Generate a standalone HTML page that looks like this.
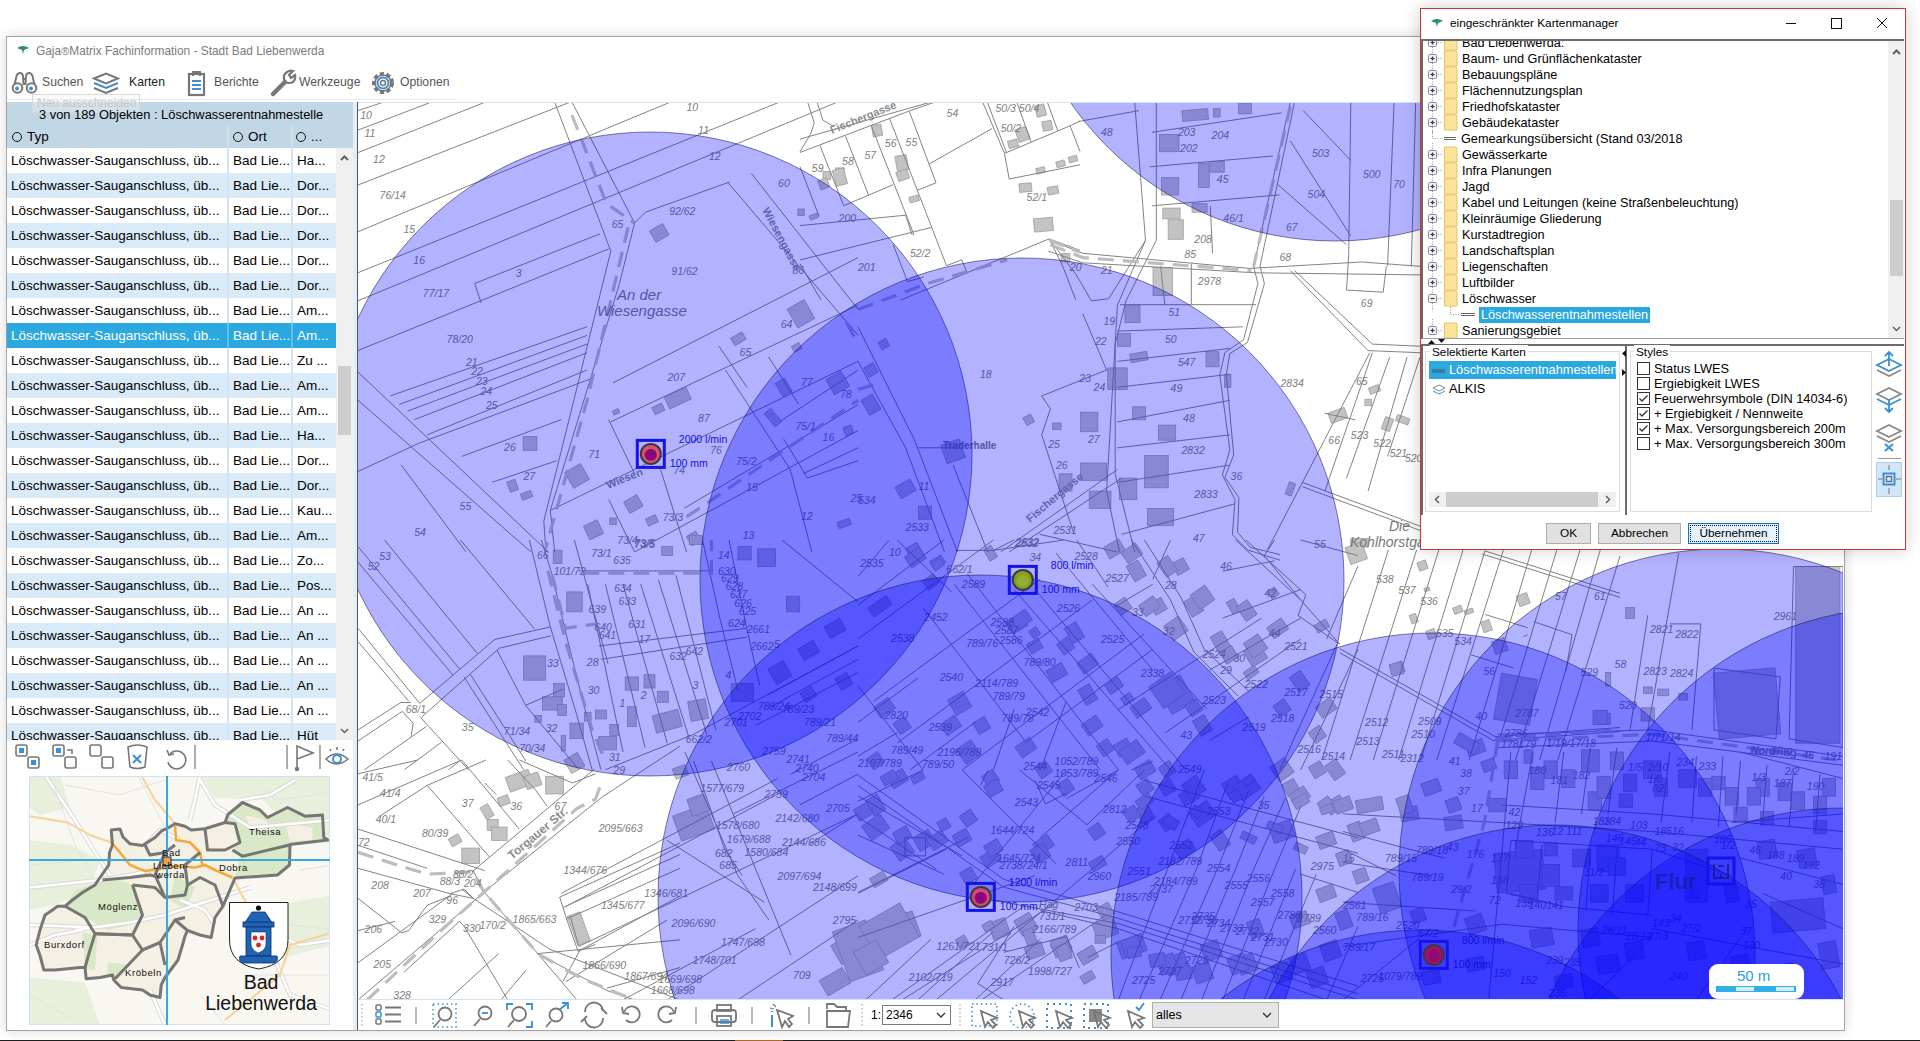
<!DOCTYPE html><html><head><meta charset="utf-8"><title>Gaja Matrix</title><style>

*{box-sizing:border-box;margin:0;padding:0}
html,body{width:1920px;height:1041px;overflow:hidden;background:#fff;font-family:"Liberation Sans",sans-serif;color:#000}
.a{position:absolute}
#win{left:6px;top:36px;width:1839px;height:995px;border:1px solid #a3a3a3;background:#fff;box-shadow:0 0 12px rgba(0,0,0,.16)}
#taskbar{left:0;top:1040px;width:1920px;height:1px;background:#1e1e1e}
.tt{font-size:11.9px;color:#7b7b7b;white-space:nowrap}
.tb{font-size:12.2px;color:#555;white-space:nowrap}
.row{position:absolute;left:7px;width:329px;height:25px;font-size:13.5px;line-height:25px;white-space:nowrap;overflow:hidden}
.row span{position:absolute;top:0}
.row .c1{left:4px}.row .c2{left:226px}.row .c3{left:290px}
.row i{position:absolute;top:0;width:2px;height:25px;background:#d3e5f5}
.odd{background:#fff}.even{background:#d9eaf8}
.sel{background:#2aa8df;color:#fff}
.sel i{background:#5fbfe8}
#dlg{left:1420px;top:8px;width:486px;height:542px;border:1px solid #d13438;background:#fff;box-shadow:0 0 16px rgba(0,0,0,.2)}
.tr{position:absolute;font-size:13px;line-height:16px;height:16px;white-space:nowrap}
.lbl{font-size:12.5px;white-space:nowrap}
.cb{position:absolute;width:13px;height:13px;border:1px solid #333;background:#fff}
.btn{position:absolute;height:21px;border:1px solid #adadad;background:#e1e1e1;font-size:11.8px;line-height:19px;text-align:center}

</style></head><body>
<div id="win" class="a"></div>
<svg class="a" style="left:16px;top:45px" width="14" height="10" viewBox="0 0 14 10"><path d="M1 3 Q7 -1 13 3 L8 5 L7 9 L6 5 Z" fill="#2e8a7a"/></svg>
<div class="a tt" style="left:36px;top:44px">Gaja<span style="font-size:11px">®</span>Matrix Fachinformation - Stadt Bad Liebenwerda</div>
<div class="a tb" style="left:42px;top:75px">Suchen</div>
<div class="a tb" style="left:129px;top:75px;color:#222">Karten</div>
<div class="a tb" style="left:214px;top:75px">Berichte</div>
<div class="a tb" style="left:299px;top:75px">Werkzeuge</div>
<div class="a tb" style="left:400px;top:75px">Optionen</div>
<svg class="a" style="left:10px;top:66px" width="450" height="34" viewBox="0 0 450 34" fill="none" stroke-width="2.2">
<g stroke="#777" stroke-width="2"><path d="M4 21 L6.5 10 Q7.5 7 10 7 Q12.5 7 13 10 L13.5 19"/><path d="M25 21 L22.5 10 Q21.5 7 19 7 Q16.5 7 16 10 L15.5 19"/><path d="M13 13 H16 M13 18 H16"/><circle cx="7.5" cy="22" r="4.8" fill="#fff"/><circle cx="21.5" cy="22" r="4.8" fill="#fff"/></g>
<circle cx="7" cy="22.5" r="2" fill="#3a8fd8" stroke="none"/><circle cx="21" cy="22.5" r="2" fill="#3a8fd8" stroke="none"/>
<g transform="translate(82,0)" stroke-width="2"><path d="M2 12.5 L14 7.5 L26 12.5 L14 17.5 Z" stroke="#777"/><path d="M2 17 L14 22 L26 17" stroke="#3a8fd8"/><path d="M2 22 L14 27 L26 22" stroke="#777"/></g>
<g transform="translate(177,0)"><rect x="2" y="8" width="15" height="21" stroke="#777"/><path d="M6 6 V10 M13 6 V10 M5 6 H14" stroke="#777"/><path d="M5 15 H14 M5 19 H14 M5 23 H14" stroke="#3a8fd8"/></g>
<g transform="translate(259,0)"><path d="M4 28 L16 16" stroke="#777" stroke-width="4.5" stroke-linecap="round"/><path d="M16 16 Q13 9 18 6 Q21 4 24 5 L20 9 L22 12 L26 9 Q27 13 24 16 Q20 18 16 16" stroke="#777"/><circle cx="5" cy="27" r="1" fill="#3a8fd8" stroke="none"/></g>
<g transform="translate(360,0)"><circle cx="13" cy="17" r="9" stroke="#777" stroke-dasharray="4 2.5" stroke-width="4"/><circle cx="13" cy="17" r="8" stroke="#777" stroke-width="1.5"/><circle cx="13" cy="17" r="5.5" stroke="#3a8fd8" stroke-width="2"/><circle cx="13" cy="17" r="2.5" stroke="#777" stroke-width="1.5"/></g>
</svg>
<div class="a" style="left:7px;top:99px;width:449px;height:1px;background:#e8e8e8"></div>
<div class="a" style="left:7px;top:102px;width:346px;height:46px;background:#c2d7e6"></div>
<div class="a" style="left:32px;top:94px;width:108px;height:19px;border:1px solid #d8d8d8;background:rgba(240,240,240,.35);font-size:12px;color:#c8c8c8;padding-left:4px;line-height:17px">Neu ausschneiden</div>
<div class="a" style="left:39px;top:107px;font-size:12.85px;white-space:nowrap">3 von 189 Objekten : Löschwasserentnahmestelle</div>
<div class="a" style="left:12px;top:129px;font-size:13.5px;white-space:nowrap"><span style="display:inline-block;width:10px;height:10px;border:1px solid #111;border-radius:50%;margin-right:5px;vertical-align:-1px"></span>Typ</div>
<div class="a" style="left:233px;top:129px;font-size:13.5px;white-space:nowrap"><span style="display:inline-block;width:10px;height:10px;border:1px solid #111;border-radius:50%;margin-right:5px;vertical-align:-1px"></span>Ort</div>
<div class="a" style="left:296px;top:129px;font-size:13.5px;white-space:nowrap"><span style="display:inline-block;width:10px;height:10px;border:1px solid #111;border-radius:50%;margin-right:5px;vertical-align:-1px"></span>...</div>
<div class="a" style="left:227px;top:126px;width:2px;height:21px;background:#cfe0ee"></div>
<div class="a" style="left:291px;top:126px;width:2px;height:21px;background:#cfe0ee"></div>
<div class="a" style="left:7px;top:148px;width:329px;height:592px;overflow:hidden">
<div class="row odd" style="left:0;top:0px"><span class="c1">Löschwasser-Sauganschluss, üb...</span><i style="left:220px"></i><span class="c2">Bad Lie...</span><i style="left:284px"></i><span class="c3">Ha...</span></div>
<div class="row even" style="left:0;top:25px"><span class="c1">Löschwasser-Sauganschluss, üb...</span><i style="left:220px"></i><span class="c2">Bad Lie...</span><i style="left:284px"></i><span class="c3">Dor...</span></div>
<div class="row odd" style="left:0;top:50px"><span class="c1">Löschwasser-Sauganschluss, üb...</span><i style="left:220px"></i><span class="c2">Bad Lie...</span><i style="left:284px"></i><span class="c3">Dor...</span></div>
<div class="row even" style="left:0;top:75px"><span class="c1">Löschwasser-Sauganschluss, üb...</span><i style="left:220px"></i><span class="c2">Bad Lie...</span><i style="left:284px"></i><span class="c3">Dor...</span></div>
<div class="row odd" style="left:0;top:100px"><span class="c1">Löschwasser-Sauganschluss, üb...</span><i style="left:220px"></i><span class="c2">Bad Lie...</span><i style="left:284px"></i><span class="c3">Dor...</span></div>
<div class="row even" style="left:0;top:125px"><span class="c1">Löschwasser-Sauganschluss, üb...</span><i style="left:220px"></i><span class="c2">Bad Lie...</span><i style="left:284px"></i><span class="c3">Dor...</span></div>
<div class="row odd" style="left:0;top:150px"><span class="c1">Löschwasser-Sauganschluss, üb...</span><i style="left:220px"></i><span class="c2">Bad Lie...</span><i style="left:284px"></i><span class="c3">Am...</span></div>
<div class="row sel" style="left:0;top:175px"><span class="c1">Löschwasser-Sauganschluss, üb...</span><i style="left:220px"></i><span class="c2">Bad Lie...</span><i style="left:284px"></i><span class="c3">Am...</span></div>
<div class="row odd" style="left:0;top:200px"><span class="c1">Löschwasser-Sauganschluss, üb...</span><i style="left:220px"></i><span class="c2">Bad Lie...</span><i style="left:284px"></i><span class="c3">Zu ...</span></div>
<div class="row even" style="left:0;top:225px"><span class="c1">Löschwasser-Sauganschluss, üb...</span><i style="left:220px"></i><span class="c2">Bad Lie...</span><i style="left:284px"></i><span class="c3">Am...</span></div>
<div class="row odd" style="left:0;top:250px"><span class="c1">Löschwasser-Sauganschluss, üb...</span><i style="left:220px"></i><span class="c2">Bad Lie...</span><i style="left:284px"></i><span class="c3">Am...</span></div>
<div class="row even" style="left:0;top:275px"><span class="c1">Löschwasser-Sauganschluss, üb...</span><i style="left:220px"></i><span class="c2">Bad Lie...</span><i style="left:284px"></i><span class="c3">Ha...</span></div>
<div class="row odd" style="left:0;top:300px"><span class="c1">Löschwasser-Sauganschluss, üb...</span><i style="left:220px"></i><span class="c2">Bad Lie...</span><i style="left:284px"></i><span class="c3">Dor...</span></div>
<div class="row even" style="left:0;top:325px"><span class="c1">Löschwasser-Sauganschluss, üb...</span><i style="left:220px"></i><span class="c2">Bad Lie...</span><i style="left:284px"></i><span class="c3">Dor...</span></div>
<div class="row odd" style="left:0;top:350px"><span class="c1">Löschwasser-Sauganschluss, üb...</span><i style="left:220px"></i><span class="c2">Bad Lie...</span><i style="left:284px"></i><span class="c3">Kau...</span></div>
<div class="row even" style="left:0;top:375px"><span class="c1">Löschwasser-Sauganschluss, üb...</span><i style="left:220px"></i><span class="c2">Bad Lie...</span><i style="left:284px"></i><span class="c3">Am...</span></div>
<div class="row odd" style="left:0;top:400px"><span class="c1">Löschwasser-Sauganschluss, üb...</span><i style="left:220px"></i><span class="c2">Bad Lie...</span><i style="left:284px"></i><span class="c3">Zo...</span></div>
<div class="row even" style="left:0;top:425px"><span class="c1">Löschwasser-Sauganschluss, üb...</span><i style="left:220px"></i><span class="c2">Bad Lie...</span><i style="left:284px"></i><span class="c3">Pos...</span></div>
<div class="row odd" style="left:0;top:450px"><span class="c1">Löschwasser-Sauganschluss, üb...</span><i style="left:220px"></i><span class="c2">Bad Lie...</span><i style="left:284px"></i><span class="c3">An ...</span></div>
<div class="row even" style="left:0;top:475px"><span class="c1">Löschwasser-Sauganschluss, üb...</span><i style="left:220px"></i><span class="c2">Bad Lie...</span><i style="left:284px"></i><span class="c3">An ...</span></div>
<div class="row odd" style="left:0;top:500px"><span class="c1">Löschwasser-Sauganschluss, üb...</span><i style="left:220px"></i><span class="c2">Bad Lie...</span><i style="left:284px"></i><span class="c3">An ...</span></div>
<div class="row even" style="left:0;top:525px"><span class="c1">Löschwasser-Sauganschluss, üb...</span><i style="left:220px"></i><span class="c2">Bad Lie...</span><i style="left:284px"></i><span class="c3">An ...</span></div>
<div class="row odd" style="left:0;top:550px"><span class="c1">Löschwasser-Sauganschluss, üb...</span><i style="left:220px"></i><span class="c2">Bad Lie...</span><i style="left:284px"></i><span class="c3">An ...</span></div>
<div class="row even" style="left:0;top:575px"><span class="c1">Löschwasser-Sauganschluss, üb...</span><i style="left:220px"></i><span class="c2">Bad Lie...</span><i style="left:284px"></i><span class="c3">Hüt</span></div>
</div>
<div class="a" style="left:336px;top:148px;width:17px;height:592px;background:#f0f0f0"></div>
<div class="a" style="left:338px;top:366px;width:13px;height:69px;background:#cdcdcd"></div>
<svg class="a" style="left:336px;top:150px" width="17" height="590"><path d="M5 10 L8.5 6.5 L12 10" stroke="#606060" stroke-width="2" fill="none"/><path d="M5 579 L8.5 582.5 L12 579" stroke="#606060" stroke-width="1.5" fill="none"/></svg>
<div class="a" style="left:353px;top:102px;width:4px;height:928px;background:#e3eef9"></div>
<div class="a" style="left:357px;top:102px;width:1px;height:928px;background:#555"></div>
<svg class="a" style="left:10px;top:742px" width="345" height="30" fill="none" stroke="#777" stroke-width="1.6">
<rect x="6" y="3" width="11" height="11" rx="2"/><rect x="18" y="15" width="11" height="11" rx="2"/><rect x="9" y="6" width="5" height="5" fill="#3a8fd8" stroke="none"/><rect x="21" y="18" width="5" height="5" fill="#3a8fd8" stroke="none"/>
<rect x="43" y="3" width="11" height="11" rx="2"/><rect x="55" y="15" width="11" height="11" rx="2"/><rect x="46" y="6" width="5" height="5" fill="#3a8fd8" stroke="none"/><path d="M57 8 H62 V12"/>
<rect x="80" y="3" width="11" height="11" rx="2"/><rect x="92" y="15" width="11" height="11" rx="2"/>
<path d="M118 5 Q127 1 137 5 L135 25 Q127 28 120 25 Z"/><path d="M123 13 L131 21 M131 13 L123 21" stroke="#3a8fd8" stroke-width="2"/>
<path d="M160 12 A9 9 0 1 1 158 20"/><path d="M157 8 L159 13 L164 12" />
<path d="M185 3 V27" stroke="#999"/><path d="M277 3 V27" stroke="#999"/>
<path d="M287 27 V4 L303 11 L287 17"/><circle cx="287" cy="27" r="1.5" fill="#777"/>
<path d="M310 3 V27" stroke="#999"/>
<path d="M316 17 Q326 7 338 17 Q326 27 316 17 Z"/><circle cx="327" cy="17" r="4" stroke="#3a8fd8" stroke-width="2"/><path d="M327 5 V8 M320 7 L321 9 M334 7 L333 9"/>
</svg>
<svg class="a" style="left:358px;top:102px" width="1485" height="898" viewBox="0 0 1485 898">
<rect width="1485" height="898" fill="#fff"/>
<g fill="#c3c3c3" stroke="#a0a0a0" stroke-width="0.8">
<rect x="293.7" y="124.5" width="15.1" height="13.0" transform="rotate(-30 301.2 131.0)"/>
<rect x="433.3" y="201.0" width="19.4" height="21.6" transform="rotate(-30 443.0 211.8)"/>
<rect x="373.9" y="232.5" width="13.0" height="8.6" transform="rotate(-30 380.3 236.8)"/>
<rect x="434.4" y="242.2" width="8.6" height="6.5" transform="rotate(-30 438.7 245.5)"/>
<rect x="307.9" y="289.6" width="23.8" height="13.0" transform="rotate(-25 319.8 296.1)"/>
<rect x="295.0" y="303.0" width="10.8" height="7.8" transform="rotate(-25 300.4 306.9)"/>
<rect x="254.8" y="307.7" width="6.5" height="4.3" transform="rotate(-25 258.0 309.9)"/>
<rect x="165.1" y="334.5" width="13.8" height="13.8" transform="rotate(0 172.0 341.4)"/>
<rect x="210.0" y="364.8" width="18.2" height="18.2" transform="rotate(-30 219.1 373.9)"/>
<rect x="150.4" y="378.4" width="8.6" height="10.8" transform="rotate(-20 154.7 383.8)"/>
<rect x="163.2" y="390.1" width="10.8" height="6.5" transform="rotate(-20 168.6 393.3)"/>
<rect x="267.7" y="395.5" width="15.1" height="13.0" transform="rotate(-30 275.3 401.9)"/>
<rect x="228.0" y="420.3" width="15.1" height="15.1" transform="rotate(-25 235.5 427.9)"/>
<rect x="251.8" y="416.0" width="6.5" height="6.5" transform="rotate(0 255.0 419.2)"/>
<rect x="288.5" y="414.5" width="10.8" height="7.8" transform="rotate(-25 293.9 418.4)"/>
<rect x="330.4" y="431.1" width="10.8" height="10.8" transform="rotate(-30 335.8 436.5)"/>
<rect x="420.3" y="277.7" width="10.8" height="15.1" transform="rotate(-30 425.7 285.3)"/>
<rect x="471.1" y="272.3" width="17.3" height="17.3" transform="rotate(-30 479.7 280.9)"/>
<rect x="486.2" y="324.1" width="8.6" height="8.6" transform="rotate(-20 490.5 328.5)"/>
<rect x="479.7" y="418.2" width="13.0" height="6.5" transform="rotate(-20 486.2 421.4)"/>
<rect x="410.6" y="306.9" width="8.6" height="17.3" transform="rotate(-40 414.9 315.5)"/>
<rect x="465.0" y="69.6" width="7.8" height="7.8" transform="rotate(0 468.9 73.5)"/>
<rect x="477.6" y="65.9" width="8.6" height="15.1" transform="rotate(0 481.9 73.5)"/>
<rect x="439.8" y="107.0" width="6.5" height="6.5" transform="rotate(0 443.0 110.2)"/>
<rect x="451.6" y="112.4" width="8.6" height="4.3" transform="rotate(-20 456.0 114.5)"/>
<rect x="703.2" y="151.3" width="8.6" height="8.6" transform="rotate(0 707.5 155.6)"/>
<rect x="824.2" y="7.6" width="25.9" height="10.8" transform="rotate(-5 837.2 13.0)"/>
<rect x="855.6" y="6.5" width="6.5" height="8.6" transform="rotate(0 858.8 10.8)"/>
<rect x="880.4" y="1.1" width="13.0" height="10.8" transform="rotate(0 886.9 6.5)"/>
<rect x="801.5" y="32.4" width="19.5" height="17.3" transform="rotate(0 811.3 41.1)"/>
<rect x="803.5" y="75.7" width="17.3" height="17.3" transform="rotate(0 812.1 84.3)"/>
<rect x="840.4" y="61.6" width="10.8" height="23.8" transform="rotate(0 845.8 73.5)"/>
<rect x="851.2" y="59.4" width="15.1" height="10.8" transform="rotate(0 858.8 64.8)"/>
<rect x="804.8" y="106.1" width="17.3" height="10.8" transform="rotate(0 813.4 111.5)"/>
<rect x="810.2" y="117.8" width="15.1" height="19.5" transform="rotate(0 817.7 127.5)"/>
<rect x="834.0" y="101.6" width="15.1" height="8.6" transform="rotate(0 841.5 105.9)"/>
<rect x="795.0" y="165.4" width="19.5" height="28.1" transform="rotate(0 804.8 179.4)"/>
<rect x="766.9" y="203.2" width="15.1" height="17.3" transform="rotate(0 774.5 211.8)"/>
<rect x="759.4" y="231.3" width="13.0" height="13.0" transform="rotate(0 765.9 237.8)"/>
<rect x="772.3" y="250.7" width="17.3" height="8.6" transform="rotate(-10 781.0 255.1)"/>
<rect x="749.7" y="265.9" width="19.5" height="21.6" transform="rotate(0 759.4 276.7)"/>
<rect x="774.5" y="304.8" width="13.0" height="13.0" transform="rotate(0 781.0 311.3)"/>
<rect x="800.4" y="323.1" width="17.3" height="15.1" transform="rotate(0 809.1 330.7)"/>
<rect x="786.4" y="353.4" width="23.8" height="32.4" transform="rotate(0 798.3 369.6)"/>
<rect x="761.5" y="376.1" width="17.3" height="21.6" transform="rotate(0 770.2 386.9)"/>
<rect x="722.6" y="310.2" width="17.3" height="19.5" transform="rotate(0 731.3 319.9)"/>
<rect x="722.6" y="361.0" width="25.9" height="17.3" transform="rotate(0 735.6 369.6)"/>
<rect x="701.0" y="371.8" width="13.0" height="17.3" transform="rotate(0 707.5 380.4)"/>
<rect x="731.3" y="389.1" width="21.6" height="17.3" transform="rotate(0 742.1 397.7)"/>
<rect x="789.6" y="406.4" width="25.9" height="17.3" transform="rotate(0 802.6 415.0)"/>
<rect x="848.0" y="249.7" width="13.0" height="15.1" transform="rotate(0 854.5 257.2)"/>
<rect x="866.4" y="272.3" width="6.5" height="13.0" transform="rotate(0 869.6 278.8)"/>
<rect x="666.4" y="313.4" width="8.6" height="8.6" transform="rotate(-30 670.8 317.7)"/>
<rect x="694.5" y="321.0" width="8.6" height="6.5" transform="rotate(0 698.9 324.2)"/>
<rect x="929.1" y="380.4" width="6.5" height="13.0" transform="rotate(20 932.3 386.9)"/>
<rect x="971.2" y="308.0" width="17.3" height="10.8" transform="rotate(-20 979.9 313.4)"/>
<rect x="1006.9" y="297.2" width="6.5" height="6.5" transform="rotate(0 1010.1 300.4)"/>
<rect x="1011.2" y="284.2" width="10.8" height="6.5" transform="rotate(-20 1016.6 287.5)"/>
<rect x="1025.2" y="315.6" width="8.6" height="13.0" transform="rotate(20 1029.6 322.1)"/>
<rect x="1038.2" y="314.5" width="13.0" height="6.5" transform="rotate(20 1044.7 317.7)"/>
<rect x="585.4" y="339.6" width="19.5" height="19.5" transform="rotate(-20 595.1 349.3)"/>
<rect x="538.9" y="380.4" width="17.3" height="13.0" transform="rotate(-30 547.6 386.9)"/>
<rect x="506.5" y="294.0" width="13.0" height="17.3" transform="rotate(-30 513.0 302.6)"/>
<rect x="560.5" y="404.2" width="13.0" height="13.0" transform="rotate(0 567.0 410.7)"/>
<rect x="992.8" y="436.6" width="17.3" height="8.6" transform="rotate(0 1001.5 440.9)"/>
<rect x="507.6" y="262.6" width="10.8" height="10.8" transform="rotate(-30 513.0 268.0)"/>
<rect x="521.6" y="237.8" width="8.6" height="8.6" transform="rotate(-30 525.9 242.1)"/>
<rect x="195.2" y="448.2" width="8.8" height="13.3" transform="rotate(0 199.6 454.8)"/>
<rect x="208.7" y="489.9" width="15.5" height="19.9" transform="rotate(0 216.4 499.8)"/>
<rect x="165.6" y="553.9" width="22.1" height="24.3" transform="rotate(0 176.7 566.1)"/>
<rect x="195.5" y="581.6" width="11.0" height="13.3" transform="rotate(0 201.0 588.2)"/>
<rect x="184.4" y="594.8" width="19.9" height="13.3" transform="rotate(0 194.3 601.4)"/>
<rect x="199.6" y="602.5" width="8.8" height="11.0" transform="rotate(0 204.1 608.1)"/>
<rect x="176.9" y="613.6" width="6.6" height="6.6" transform="rotate(0 180.2 616.9)"/>
<rect x="212.0" y="621.1" width="13.3" height="15.5" transform="rotate(0 218.6 628.8)"/>
<rect x="203.2" y="633.5" width="4.4" height="15.5" transform="rotate(0 205.4 641.2)"/>
<rect x="208.7" y="653.3" width="15.5" height="15.5" transform="rotate(-30 216.4 661.1)"/>
<rect x="267.2" y="574.9" width="13.3" height="13.3" transform="rotate(0 273.9 581.6)"/>
<rect x="286.0" y="572.7" width="11.0" height="13.3" transform="rotate(0 291.5 579.3)"/>
<rect x="299.3" y="589.3" width="11.0" height="11.0" transform="rotate(0 304.8 594.8)"/>
<rect x="295.9" y="610.3" width="26.5" height="17.7" transform="rotate(-15 309.2 619.1)"/>
<rect x="331.3" y="598.1" width="17.7" height="19.9" transform="rotate(-10 340.1 608.1)"/>
<rect x="226.4" y="610.3" width="6.6" height="8.8" transform="rotate(0 229.7 614.7)"/>
<rect x="237.4" y="608.1" width="11.0" height="8.8" transform="rotate(0 242.9 612.5)"/>
<rect x="240.7" y="634.6" width="17.7" height="13.3" transform="rotate(0 249.6 641.2)"/>
<rect x="251.8" y="622.4" width="8.8" height="11.0" transform="rotate(0 256.2 627.9)"/>
<rect x="269.4" y="604.7" width="8.8" height="19.9" transform="rotate(0 273.9 614.7)"/>
<rect x="303.7" y="444.6" width="11.0" height="8.8" transform="rotate(0 309.2 449.0)"/>
<rect x="331.3" y="433.6" width="13.3" height="8.8" transform="rotate(0 337.9 438.0)"/>
<rect x="379.9" y="444.6" width="13.3" height="13.3" transform="rotate(0 386.5 451.3)"/>
<rect x="399.7" y="446.8" width="17.7" height="17.7" transform="rotate(0 408.6 455.7)"/>
<rect x="428.4" y="494.3" width="13.3" height="15.5" transform="rotate(0 435.1 502.0)"/>
<rect x="373.2" y="581.6" width="22.1" height="17.7" transform="rotate(0 384.3 590.4)"/>
<rect x="149.1" y="671.0" width="24.3" height="15.5" transform="rotate(-20 161.2 678.7)"/>
<rect x="140.2" y="694.2" width="11.0" height="8.8" transform="rotate(-20 145.8 698.6)"/>
<rect x="166.7" y="672.1" width="15.5" height="13.3" transform="rotate(-20 174.5 678.7)"/>
<rect x="187.7" y="674.3" width="17.7" height="17.7" transform="rotate(0 196.6 683.1)"/>
<rect x="124.6" y="703.0" width="8.8" height="13.3" transform="rotate(-30 129.0 709.6)"/>
<rect x="129.2" y="717.4" width="11.0" height="11.0" transform="rotate(0 134.7 722.9)"/>
<rect x="133.6" y="725.1" width="15.5" height="13.3" transform="rotate(0 141.3 731.7)"/>
<rect x="103.8" y="746.1" width="17.7" height="15.5" transform="rotate(0 112.6 753.8)"/>
<rect x="91.7" y="733.9" width="11.0" height="8.8" transform="rotate(-30 97.2 738.4)"/>
<rect x="214.2" y="811.2" width="13.3" height="30.9" transform="rotate(-20 220.8 826.7)"/>
<rect x="318.0" y="707.4" width="35.3" height="26.5" transform="rotate(-20 335.7 720.7)"/>
<rect x="331.3" y="694.2" width="17.7" height="17.7" transform="rotate(-20 340.1 703.0)"/>
<rect x="315.8" y="664.4" width="13.3" height="11.0" transform="rotate(-20 322.4 669.9)"/>
<rect x="477.0" y="837.7" width="17.7" height="22.1" transform="rotate(-30 485.9 848.8)"/>
<rect x="463.8" y="870.9" width="26.5" height="17.7" transform="rotate(-30 477.0 879.7)"/>
<rect x="413.0" y="561.7" width="17.7" height="17.7" transform="rotate(-30 421.8 570.5)"/>
<rect x="441.7" y="541.8" width="17.7" height="13.3" transform="rotate(-30 450.5 548.4)"/>
<rect x="468.2" y="519.7" width="17.7" height="13.3" transform="rotate(-30 477.0 526.3)"/>
<rect x="443.9" y="587.1" width="13.3" height="11.0" transform="rotate(-30 450.5 592.6)"/>
<rect x="479.2" y="572.7" width="13.3" height="13.3" transform="rotate(-30 485.9 579.3)"/>
<rect x="550.8" y="442.4" width="13.3" height="17.7" transform="rotate(-30 557.4 451.3)"/>
<rect x="572.9" y="455.7" width="13.3" height="8.8" transform="rotate(-30 579.5 460.1)"/>
<rect x="628.1" y="444.6" width="8.8" height="13.3" transform="rotate(-30 632.5 451.3)"/>
<rect x="650.2" y="515.3" width="17.7" height="13.3" transform="rotate(-30 659.0 521.9)"/>
<rect x="670.1" y="538.5" width="13.3" height="11.0" transform="rotate(-30 676.7 544.0)"/>
<rect x="709.8" y="521.9" width="13.3" height="17.7" transform="rotate(-30 716.4 530.8)"/>
<rect x="689.9" y="563.9" width="17.7" height="13.3" transform="rotate(-30 698.8 570.5)"/>
<rect x="723.1" y="583.8" width="13.3" height="17.7" transform="rotate(-30 729.7 592.6)"/>
<rect x="757.3" y="639.0" width="15.5" height="13.3" transform="rotate(-30 765.0 645.6)"/>
<rect x="778.3" y="661.1" width="17.7" height="13.3" transform="rotate(-30 787.1 667.7)"/>
<rect x="802.6" y="678.7" width="13.3" height="13.3" transform="rotate(-30 809.2 685.4)"/>
<rect x="592.8" y="592.6" width="17.7" height="17.7" transform="rotate(-30 601.6 601.4)"/>
<rect x="617.1" y="616.9" width="13.3" height="13.3" transform="rotate(-30 623.7 623.5)"/>
<rect x="530.9" y="669.9" width="17.7" height="13.3" transform="rotate(-30 539.8 676.5)"/>
<rect x="511.0" y="694.2" width="13.3" height="17.7" transform="rotate(-30 517.7 703.0)"/>
<rect x="557.4" y="730.6" width="17.7" height="15.5" transform="rotate(-30 566.3 738.4)"/>
<rect x="603.8" y="767.1" width="13.3" height="13.3" transform="rotate(-30 610.4 773.7)"/>
<rect x="482.3" y="822.3" width="35.3" height="53.0" transform="rotate(-20 500.0 848.8)"/>
<rect x="530.9" y="813.4" width="26.5" height="26.5" transform="rotate(-20 544.2 826.7)"/>
<rect x="694.3" y="837.7" width="17.7" height="13.3" transform="rotate(-30 703.2 844.4)"/>
<rect x="723.1" y="870.9" width="13.3" height="8.8" transform="rotate(-30 729.7 875.3)"/>
<rect x="804.8" y="577.1" width="26.5" height="30.9" transform="rotate(-30 818.0 592.6)"/>
<rect x="837.9" y="614.7" width="13.3" height="17.7" transform="rotate(-30 844.5 623.5)"/>
<rect x="855.6" y="530.8" width="13.3" height="17.7" transform="rotate(-30 862.2 539.6)"/>
<rect x="864.4" y="546.2" width="13.3" height="13.3" transform="rotate(-30 871.0 552.8)"/>
<rect x="888.7" y="544.0" width="17.7" height="17.7" transform="rotate(-30 897.5 552.8)"/>
<rect x="793.7" y="497.6" width="13.3" height="13.3" transform="rotate(-30 800.4 504.3)"/>
<rect x="829.1" y="495.4" width="13.3" height="17.7" transform="rotate(-30 835.7 504.3)"/>
<rect x="747.4" y="440.2" width="17.7" height="13.3" transform="rotate(-30 756.2 446.8)"/>
<rect x="771.6" y="460.1" width="13.3" height="17.7" transform="rotate(-30 778.3 468.9)"/>
<rect x="815.8" y="457.9" width="13.3" height="13.3" transform="rotate(-30 822.4 464.5)"/>
<rect x="844.5" y="491.0" width="8.8" height="8.8" transform="rotate(-30 848.9 495.4)"/>
<rect x="871.0" y="497.6" width="8.8" height="13.3" transform="rotate(-30 875.4 504.3)"/>
<rect x="957.2" y="519.7" width="13.3" height="8.8" transform="rotate(-30 963.8 524.1)"/>
<rect x="952.7" y="661.1" width="13.3" height="13.3" transform="rotate(-30 959.4 667.7)"/>
<rect x="968.2" y="696.4" width="17.7" height="13.3" transform="rotate(-30 977.0 703.0)"/>
<rect x="926.2" y="678.7" width="13.3" height="13.3" transform="rotate(-30 932.9 685.4)"/>
<rect x="866.6" y="676.5" width="17.7" height="17.7" transform="rotate(-30 875.4 685.4)"/>
<rect x="822.4" y="687.6" width="17.7" height="13.3" transform="rotate(-30 831.3 694.2)"/>
<rect x="780.5" y="703.0" width="13.3" height="17.7" transform="rotate(-30 787.1 711.9)"/>
<rect x="913.0" y="720.7" width="22.1" height="17.7" transform="rotate(-20 924.0 729.5)"/>
<rect x="959.4" y="731.7" width="17.7" height="13.3" transform="rotate(-20 968.2 738.4)"/>
<rect x="979.2" y="749.4" width="13.3" height="13.3" transform="rotate(-20 985.9 756.0)"/>
<rect x="760.6" y="835.5" width="26.5" height="17.7" transform="rotate(-20 773.9 844.4)"/>
<rect x="807.0" y="853.2" width="22.1" height="17.7" transform="rotate(-20 818.0 862.0)"/>
<rect x="844.5" y="839.9" width="17.7" height="17.7" transform="rotate(-20 853.4 848.8)"/>
<rect x="879.9" y="853.2" width="17.7" height="17.7" transform="rotate(-20 888.7 862.0)"/>
<rect x="932.9" y="853.2" width="17.7" height="17.7" transform="rotate(-20 941.7 862.0)"/>
<rect x="963.8" y="839.9" width="17.7" height="17.7" transform="rotate(-20 972.6 848.8)"/>
<rect x="740.7" y="802.4" width="13.3" height="13.3" transform="rotate(-30 747.4 809.0)"/>
<rect x="659.0" y="813.4" width="17.7" height="17.7" transform="rotate(-30 667.8 822.3)"/>
<rect x="720.9" y="846.6" width="17.7" height="13.3" transform="rotate(-30 729.7 853.2)"/>
<rect x="548.6" y="449.0" width="17.7" height="13.3" transform="rotate(-35 557.4 455.7)"/>
<rect x="574.0" y="457.9" width="11.0" height="8.8" transform="rotate(-35 579.5 462.3)"/>
<rect x="511.0" y="498.7" width="22.1" height="11.0" transform="rotate(-35 522.1 504.3)"/>
<rect x="566.3" y="474.4" width="13.3" height="11.0" transform="rotate(-35 572.9 480.0)"/>
<rect x="654.6" y="510.9" width="17.7" height="13.3" transform="rotate(-35 663.4 517.5)"/>
<rect x="672.3" y="526.3" width="8.8" height="8.8" transform="rotate(-35 676.7 530.8)"/>
<rect x="701.0" y="537.4" width="13.3" height="13.3" transform="rotate(-35 707.6 544.0)"/>
<rect x="720.9" y="555.1" width="17.7" height="13.3" transform="rotate(-35 729.7 561.7)"/>
<rect x="748.5" y="578.2" width="15.5" height="11.0" transform="rotate(-35 756.2 583.8)"/>
<rect x="763.9" y="592.6" width="11.0" height="8.8" transform="rotate(-35 769.4 597.0)"/>
<rect x="773.9" y="599.2" width="17.7" height="13.3" transform="rotate(-35 782.7 605.8)"/>
<rect x="762.8" y="642.3" width="22.1" height="15.5" transform="rotate(-35 773.9 650.0)"/>
<rect x="802.6" y="661.1" width="13.3" height="13.3" transform="rotate(-35 809.2 667.7)"/>
<rect x="826.9" y="676.5" width="17.7" height="17.7" transform="rotate(-35 835.7 685.4)"/>
<rect x="833.5" y="703.0" width="22.1" height="17.7" transform="rotate(-35 844.5 711.9)"/>
<rect x="855.6" y="729.5" width="13.3" height="17.7" transform="rotate(-35 862.2 738.4)"/>
<rect x="818.0" y="740.6" width="17.7" height="13.3" transform="rotate(-35 826.9 747.2)"/>
<rect x="517.7" y="599.2" width="17.7" height="13.3" transform="rotate(-35 526.5 605.8)"/>
<rect x="537.5" y="616.9" width="13.3" height="13.3" transform="rotate(-35 544.2 623.5)"/>
<rect x="511.0" y="652.2" width="13.3" height="13.3" transform="rotate(-35 517.7 658.9)"/>
<rect x="583.9" y="616.9" width="17.7" height="13.3" transform="rotate(-35 592.8 623.5)"/>
<rect x="601.6" y="641.2" width="17.7" height="17.7" transform="rotate(-35 610.4 650.0)"/>
<rect x="625.9" y="669.9" width="13.3" height="13.3" transform="rotate(-35 632.5 676.5)"/>
<rect x="659.0" y="639.0" width="17.7" height="13.3" transform="rotate(-35 667.8 645.6)"/>
<rect x="678.9" y="661.1" width="13.3" height="13.3" transform="rotate(-35 685.5 667.7)"/>
<rect x="701.0" y="678.7" width="13.3" height="13.3" transform="rotate(-35 707.6 685.4)"/>
<rect x="725.3" y="616.9" width="17.7" height="13.3" transform="rotate(-35 734.1 623.5)"/>
<rect x="740.7" y="639.0" width="13.3" height="13.3" transform="rotate(-35 747.4 645.6)"/>
<rect x="795.9" y="574.9" width="26.5" height="26.5" transform="rotate(-35 809.2 588.2)"/>
<rect x="829.1" y="599.2" width="13.3" height="13.3" transform="rotate(-35 835.7 605.8)"/>
<rect x="864.4" y="546.2" width="13.3" height="13.3" transform="rotate(-35 871.0 552.8)"/>
<rect x="888.7" y="535.2" width="17.7" height="17.7" transform="rotate(-35 897.5 544.0)"/>
<rect x="886.5" y="566.1" width="13.3" height="8.8" transform="rotate(-35 893.1 570.5)"/>
<rect x="910.8" y="519.7" width="17.7" height="13.3" transform="rotate(-35 919.6 526.3)"/>
<rect x="758.4" y="497.6" width="13.3" height="13.3" transform="rotate(-35 765.0 504.3)"/>
<rect x="782.7" y="497.6" width="17.7" height="13.3" transform="rotate(-35 791.5 504.3)"/>
<rect x="809.2" y="517.5" width="17.7" height="17.7" transform="rotate(-35 818.0 526.3)"/>
<rect x="765.0" y="444.6" width="17.7" height="13.3" transform="rotate(-35 773.9 451.3)"/>
<rect x="802.6" y="455.7" width="13.3" height="17.7" transform="rotate(-35 809.2 464.5)"/>
<rect x="835.7" y="486.6" width="17.7" height="17.7" transform="rotate(-35 844.5 495.4)"/>
<rect x="882.1" y="499.8" width="13.3" height="17.7" transform="rotate(-35 888.7 508.7)"/>
<rect x="910.8" y="486.6" width="8.8" height="8.8" transform="rotate(-35 915.2 491.0)"/>
<rect x="506.6" y="716.3" width="22.1" height="17.7" transform="rotate(-35 517.7 725.1)"/>
<rect x="535.3" y="738.4" width="17.7" height="17.7" transform="rotate(-35 544.2 747.2)"/>
<rect x="570.7" y="731.7" width="17.7" height="13.3" transform="rotate(-35 579.5 738.4)"/>
<rect x="623.7" y="749.4" width="17.7" height="13.3" transform="rotate(-35 632.5 756.0)"/>
<rect x="676.7" y="736.1" width="17.7" height="13.3" transform="rotate(-35 685.5 742.8)"/>
<rect x="603.8" y="709.6" width="13.3" height="13.3" transform="rotate(-35 610.4 716.3)"/>
<rect x="528.7" y="813.4" width="30.9" height="26.5" transform="rotate(-20 544.2 826.7)"/>
<rect x="632.5" y="817.9" width="17.7" height="17.7" transform="rotate(-20 641.3 826.7)"/>
<rect x="667.8" y="842.2" width="17.7" height="13.3" transform="rotate(-20 676.7 848.8)"/>
<rect x="694.3" y="835.5" width="17.7" height="17.7" transform="rotate(-20 703.2 844.4)"/>
<rect x="736.3" y="817.9" width="22.1" height="17.7" transform="rotate(-20 747.4 826.7)"/>
<rect x="765.0" y="835.5" width="17.7" height="17.7" transform="rotate(-20 773.9 844.4)"/>
<rect x="800.4" y="853.2" width="17.7" height="17.7" transform="rotate(-20 809.2 862.0)"/>
<rect x="835.7" y="862.0" width="17.7" height="17.7" transform="rotate(-20 844.5 870.9)"/>
<rect x="871.0" y="853.2" width="17.7" height="17.7" transform="rotate(-20 879.9 862.0)"/>
<rect x="915.2" y="862.0" width="17.7" height="17.7" transform="rotate(-20 924.0 870.9)"/>
<rect x="950.5" y="866.4" width="17.7" height="17.7" transform="rotate(-20 959.4 875.3)"/>
<rect x="890.9" y="817.9" width="13.3" height="17.7" transform="rotate(-20 897.5 826.7)"/>
<rect x="932.9" y="811.2" width="17.7" height="13.3" transform="rotate(-20 941.7 817.9)"/>
<rect x="959.4" y="784.7" width="17.7" height="13.3" transform="rotate(-20 968.2 791.4)"/>
<rect x="979.2" y="809.0" width="13.3" height="17.7" transform="rotate(-20 985.9 817.9)"/>
<rect x="877.7" y="676.5" width="22.1" height="17.7" transform="rotate(-35 888.7 685.4)"/>
<rect x="915.2" y="658.9" width="17.7" height="17.7" transform="rotate(-35 924.0 667.7)"/>
<rect x="932.9" y="687.6" width="17.7" height="13.3" transform="rotate(-35 941.7 694.2)"/>
<rect x="961.6" y="696.4" width="13.3" height="13.3" transform="rotate(-35 968.2 703.0)"/>
<rect x="970.4" y="658.9" width="13.3" height="17.7" transform="rotate(-35 977.0 667.7)"/>
<rect x="952.7" y="625.7" width="13.3" height="13.3" transform="rotate(-35 959.4 632.3)"/>
<rect x="959.4" y="599.2" width="17.7" height="13.3" transform="rotate(-35 968.2 605.8)"/>
<rect x="935.1" y="570.5" width="13.3" height="17.7" transform="rotate(-35 941.7 579.3)"/>
<rect x="917.4" y="599.2" width="13.3" height="13.3" transform="rotate(-35 924.0 605.8)"/>
<rect x="767.2" y="705.2" width="13.3" height="13.3" transform="rotate(-35 773.9 711.9)"/>
<rect x="731.9" y="722.9" width="13.3" height="13.3" transform="rotate(-35 738.5 729.5)"/>
<rect x="802.6" y="714.1" width="13.3" height="13.3" transform="rotate(-35 809.2 720.7)"/>
<rect x="780.5" y="678.7" width="13.3" height="13.3" transform="rotate(-35 787.1 685.4)"/>
<rect x="989.4" y="442.4" width="17.7" height="17.7" transform="rotate(-20 998.3 451.3)"/>
<rect x="1060.1" y="459.2" width="8.8" height="8.8" transform="rotate(-20 1064.5 463.6)"/>
<rect x="1066.3" y="485.7" width="5.3" height="3.5" transform="rotate(-20 1068.9 487.5)"/>
<rect x="1052.4" y="512.2" width="6.6" height="8.8" transform="rotate(-20 1055.7 516.6)"/>
<rect x="1095.4" y="504.5" width="8.8" height="6.6" transform="rotate(-20 1099.8 507.8)"/>
<rect x="1106.5" y="507.3" width="8.8" height="4.4" transform="rotate(-20 1110.9 509.6)"/>
<rect x="1124.1" y="518.6" width="8.8" height="11.0" transform="rotate(-20 1128.6 524.1)"/>
<rect x="1159.7" y="492.1" width="11.0" height="11.0" transform="rotate(-20 1165.2 497.6)"/>
<rect x="1068.9" y="527.7" width="8.8" height="8.8" transform="rotate(-20 1073.3 532.1)"/>
<rect x="1034.7" y="560.6" width="11.0" height="11.0" transform="rotate(-20 1040.2 566.1)"/>
<rect x="1135.2" y="537.4" width="13.3" height="13.3" transform="rotate(-20 1141.8 544.0)"/>
<rect x="1267.7" y="505.4" width="8.8" height="11.0" transform="rotate(0 1272.1 510.9)"/>
<rect x="1247.4" y="570.5" width="5.3" height="13.3" transform="rotate(0 1250.0 577.1)"/>
<rect x="1285.4" y="584.9" width="8.8" height="6.6" transform="rotate(0 1289.8 588.2)"/>
<rect x="1299.7" y="587.1" width="11.0" height="6.6" transform="rotate(0 1305.2 590.4)"/>
<rect x="1320.7" y="591.5" width="8.8" height="6.6" transform="rotate(0 1325.1 594.8)"/>
<rect x="1239.0" y="611.4" width="13.3" height="11.0" transform="rotate(0 1245.6 616.9)"/>
<rect x="1283.1" y="605.8" width="13.3" height="13.3" transform="rotate(0 1289.8 612.5)"/>
<rect x="1358.2" y="568.3" width="61.8" height="66.3" transform="rotate(-5 1389.2 601.4)"/>
<rect x="1437.7" y="464.5" width="44.2" height="176.7" transform="rotate(0 1459.8 552.8)"/>
<rect x="1413.4" y="798.0" width="53.0" height="30.9" transform="rotate(-5 1440.0 813.4)"/>
<rect x="1327.3" y="747.2" width="22.1" height="53.0" transform="rotate(0 1338.4 773.7)"/>
<rect x="1137.4" y="749.4" width="48.6" height="39.8" transform="rotate(-5 1161.7 769.3)"/>
<rect x="1183.8" y="762.6" width="17.7" height="22.1" transform="rotate(0 1192.6 773.7)"/>
<rect x="1239.0" y="742.8" width="22.1" height="26.5" transform="rotate(0 1250.0 756.0)"/>
<rect x="1108.7" y="639.0" width="17.7" height="13.3" transform="rotate(-20 1117.5 645.6)"/>
<rect x="1124.1" y="657.7" width="13.3" height="11.0" transform="rotate(-20 1130.8 663.3)"/>
<rect x="1166.1" y="647.8" width="8.8" height="13.3" transform="rotate(0 1170.5 654.4)"/>
<rect x="1186.0" y="658.9" width="13.3" height="17.7" transform="rotate(0 1192.6 667.7)"/>
<rect x="1223.5" y="647.8" width="17.7" height="22.1" transform="rotate(0 1232.4 658.9)"/>
<rect x="1252.2" y="650.0" width="13.3" height="17.7" transform="rotate(0 1258.9 658.9)"/>
<rect x="1285.4" y="658.9" width="17.7" height="17.7" transform="rotate(0 1294.2 667.7)"/>
<rect x="1320.7" y="667.7" width="17.7" height="17.7" transform="rotate(0 1329.5 676.5)"/>
<rect x="1353.8" y="674.3" width="13.3" height="13.3" transform="rotate(0 1360.4 680.9)"/>
<rect x="1398.0" y="676.5" width="13.3" height="17.7" transform="rotate(0 1404.6 685.4)"/>
<rect x="1420.1" y="680.9" width="13.3" height="17.7" transform="rotate(0 1426.7 689.8)"/>
<rect x="1464.2" y="676.5" width="13.3" height="17.7" transform="rotate(0 1470.9 685.4)"/>
<rect x="998.3" y="696.4" width="26.5" height="13.3" transform="rotate(-10 1011.5 703.0)"/>
<rect x="1042.4" y="705.2" width="17.7" height="13.3" transform="rotate(-10 1051.3 711.9)"/>
<rect x="1086.6" y="714.1" width="17.7" height="13.3" transform="rotate(-10 1095.4 720.7)"/>
<rect x="1018.1" y="782.5" width="22.1" height="26.5" transform="rotate(-20 1029.2 795.8)"/>
<rect x="1053.5" y="806.8" width="13.3" height="13.3" transform="rotate(-20 1060.1 813.4)"/>
<rect x="1108.7" y="813.4" width="17.7" height="17.7" transform="rotate(-20 1117.5 822.3)"/>
<rect x="1172.7" y="826.7" width="22.1" height="17.7" transform="rotate(-10 1183.8 835.5)"/>
<rect x="1223.5" y="826.7" width="17.7" height="17.7" transform="rotate(-10 1232.4 835.5)"/>
<rect x="1267.7" y="839.9" width="17.7" height="17.7" transform="rotate(-10 1276.5 848.8)"/>
<rect x="1329.5" y="839.9" width="17.7" height="17.7" transform="rotate(-10 1338.4 848.8)"/>
<rect x="1373.7" y="862.0" width="17.7" height="17.7" transform="rotate(-10 1382.5 870.9)"/>
<rect x="1417.9" y="862.0" width="17.7" height="17.7" transform="rotate(-10 1426.7 870.9)"/>
<rect x="1462.0" y="839.9" width="17.7" height="26.5" transform="rotate(-10 1470.9 853.2)"/>
<rect x="991.6" y="720.7" width="13.3" height="17.7" transform="rotate(-20 998.3 729.5)"/>
<rect x="996.0" y="767.1" width="13.3" height="13.3" transform="rotate(-20 1002.7 773.7)"/>
<rect x="1230.1" y="689.8" width="13.3" height="17.7" transform="rotate(0 1236.8 698.6)"/>
<rect x="1261.1" y="692.0" width="13.3" height="13.3" transform="rotate(0 1267.7 698.6)"/>
<rect x="1375.9" y="705.2" width="13.3" height="13.3" transform="rotate(0 1382.5 711.9)"/>
<rect x="1402.4" y="709.6" width="13.3" height="13.3" transform="rotate(0 1409.0 716.3)"/>
<rect x="1455.4" y="718.5" width="13.3" height="13.3" transform="rotate(0 1462.0 725.1)"/>
<rect x="1130.8" y="696.4" width="17.7" height="13.3" transform="rotate(0 1139.6 703.0)"/>
<rect x="1146.2" y="658.9" width="13.3" height="17.7" transform="rotate(0 1152.8 667.7)"/>
<rect x="1172.7" y="665.5" width="13.3" height="22.1" transform="rotate(0 1179.3 676.5)"/>
<rect x="1203.6" y="667.7" width="13.3" height="17.7" transform="rotate(0 1210.3 676.5)"/>
<rect x="1239.0" y="674.3" width="13.3" height="22.1" transform="rotate(0 1245.6 685.4)"/>
<rect x="1265.5" y="672.1" width="13.3" height="17.7" transform="rotate(0 1272.1 680.9)"/>
<rect x="1296.4" y="676.5" width="13.3" height="17.7" transform="rotate(0 1303.0 685.4)"/>
<rect x="1340.6" y="676.5" width="13.3" height="17.7" transform="rotate(0 1347.2 685.4)"/>
<rect x="1367.1" y="685.4" width="13.3" height="17.7" transform="rotate(0 1373.7 694.2)"/>
<rect x="1389.2" y="685.4" width="13.3" height="17.7" transform="rotate(0 1395.8 694.2)"/>
<rect x="1433.3" y="689.8" width="13.3" height="17.7" transform="rotate(0 1440.0 698.6)"/>
<rect x="1455.4" y="694.2" width="13.3" height="17.7" transform="rotate(0 1462.0 703.0)"/>
<rect x="1157.3" y="738.4" width="17.7" height="17.7" transform="rotate(0 1166.1 747.2)"/>
<rect x="1186.0" y="740.6" width="13.3" height="13.3" transform="rotate(0 1192.6 747.2)"/>
<rect x="1214.7" y="747.2" width="17.7" height="17.7" transform="rotate(0 1223.5 756.0)"/>
<rect x="1250.0" y="756.0" width="17.7" height="17.7" transform="rotate(0 1258.9 764.9)"/>
<rect x="1161.7" y="782.5" width="17.7" height="17.7" transform="rotate(0 1170.5 791.4)"/>
<rect x="1197.0" y="784.7" width="17.7" height="13.3" transform="rotate(0 1205.8 791.4)"/>
<rect x="1232.4" y="782.5" width="17.7" height="17.7" transform="rotate(0 1241.2 791.4)"/>
<rect x="1267.7" y="782.5" width="17.7" height="17.7" transform="rotate(0 1276.5 791.4)"/>
<rect x="1064.5" y="678.7" width="17.7" height="13.3" transform="rotate(-20 1073.3 685.4)"/>
<rect x="1040.2" y="694.2" width="13.3" height="17.7" transform="rotate(-20 1046.8 703.0)"/>
<rect x="1088.8" y="696.4" width="13.3" height="13.3" transform="rotate(-20 1095.4 703.0)"/>
<rect x="976.2" y="696.4" width="17.7" height="13.3" transform="rotate(-20 985.0 703.0)"/>
<rect x="1002.7" y="718.5" width="17.7" height="13.3" transform="rotate(-20 1011.5 725.1)"/>
<rect x="1400.2" y="738.4" width="17.7" height="17.7" transform="rotate(-10 1409.0 747.2)"/>
<rect x="1440.0" y="747.2" width="17.7" height="17.7" transform="rotate(-10 1448.8 756.0)"/>
<rect x="1464.2" y="773.7" width="13.3" height="17.7" transform="rotate(-10 1470.9 782.5)"/>
<rect x="1367.1" y="782.5" width="13.3" height="17.7" transform="rotate(-10 1373.7 791.4)"/>
<rect x="1373.7" y="853.2" width="17.7" height="17.7" transform="rotate(-10 1382.5 862.0)"/>
<rect x="1239.0" y="853.2" width="22.1" height="17.7" transform="rotate(-10 1250.0 862.0)"/>
<rect x="1197.0" y="873.1" width="17.7" height="13.3" transform="rotate(-10 1205.8 879.7)"/>
<rect x="1108.7" y="855.4" width="17.7" height="13.3" transform="rotate(-10 1117.5 862.0)"/>
<rect x="1064.5" y="868.7" width="17.7" height="13.3" transform="rotate(-10 1073.3 875.3)"/>
<rect x="507.8" y="809.9" width="46.9" height="39.1" transform="rotate(-30 531.2 829.4)"/>
<rect x="500.0" y="842.5" width="26.0" height="26.0" transform="rotate(-30 513.0 855.5)"/>
<rect x="625.0" y="820.3" width="10.4" height="7.8" transform="rotate(-30 630.2 824.2)"/>
<rect x="666.7" y="826.8" width="10.4" height="15.6" transform="rotate(-20 671.9 834.7)"/>
<rect x="699.2" y="842.5" width="13.0" height="15.6" transform="rotate(-20 705.7 850.3)"/>
<rect x="737.0" y="833.4" width="10.4" height="7.8" transform="rotate(0 742.2 837.3)"/>
<rect x="769.5" y="845.1" width="13.0" height="10.4" transform="rotate(-10 776.0 850.3)"/>
<rect x="791.6" y="851.6" width="15.6" height="13.0" transform="rotate(-10 799.5 858.1)"/>
<rect x="817.7" y="864.6" width="15.6" height="13.0" transform="rotate(-10 825.5 871.1)"/>
<rect x="778.6" y="694.0" width="15.6" height="10.4" transform="rotate(-35 786.4 699.2)"/>
<rect x="807.3" y="712.3" width="10.4" height="15.6" transform="rotate(-60 812.5 720.1)"/>
<rect x="833.3" y="704.5" width="10.4" height="10.4" transform="rotate(-60 838.5 709.7)"/>
<rect x="886.7" y="727.9" width="7.8" height="15.6" transform="rotate(-65 890.6 735.7)"/>
<rect x="912.7" y="717.5" width="7.8" height="15.6" transform="rotate(-65 916.6 725.3)"/>
<rect x="938.8" y="739.6" width="7.8" height="13.0" transform="rotate(-65 942.7 746.1)"/>
<rect x="934.9" y="694.0" width="15.6" height="10.4" transform="rotate(-30 942.7 699.2)"/>
<rect x="962.2" y="703.2" width="13.0" height="7.8" transform="rotate(-20 968.7 707.1)"/>
<rect x="872.4" y="688.8" width="10.4" height="10.4" transform="rotate(-30 877.6 694.0)"/>
<rect x="885.4" y="674.5" width="10.4" height="7.8" transform="rotate(-30 890.6 678.4)"/>
<rect x="523.4" y="670.6" width="15.6" height="10.4" transform="rotate(-30 531.2 675.8)"/>
<rect x="553.4" y="671.9" width="13.0" height="7.8" transform="rotate(-30 559.9 675.8)"/>
<rect x="627.6" y="679.7" width="15.6" height="13.0" transform="rotate(-30 635.4 686.2)"/>
<rect x="596.3" y="729.2" width="15.6" height="13.0" transform="rotate(-30 604.2 735.7)"/>
<rect x="627.6" y="739.6" width="15.6" height="13.0" transform="rotate(-30 635.4 746.1)"/>
<rect x="580.7" y="717.5" width="10.4" height="10.4" transform="rotate(-30 585.9 722.7)"/>
<rect x="536.5" y="726.6" width="15.6" height="13.0" transform="rotate(-30 544.3 733.1)"/>
<rect x="497.4" y="703.2" width="15.6" height="13.0" transform="rotate(-30 505.2 709.7)"/>
<rect x="513.0" y="772.2" width="15.6" height="10.4" transform="rotate(-30 520.8 777.4)"/>
<rect x="674.5" y="743.5" width="15.6" height="15.6" transform="rotate(-30 682.3 751.3)"/>
<rect x="731.8" y="756.5" width="15.6" height="10.4" transform="rotate(-30 739.6 761.7)"/>
<rect x="599.0" y="834.7" width="10.4" height="10.4" transform="rotate(-30 604.2 839.9)"/>
<rect x="1139.3" y="574.1" width="36.3" height="46.4" transform="rotate(10 1157.5 597.3)"/>
<rect x="1235.1" y="608.4" width="14.1" height="14.1" transform="rotate(0 1242.2 615.4)"/>
<rect x="1032.4" y="561.0" width="12.1" height="12.1" transform="rotate(-15 1038.5 567.0)"/>
<rect x="1097.0" y="635.6" width="24.2" height="12.1" transform="rotate(30 1109.1 641.6)"/>
<rect x="514.3" y="22.8" width="9.5" height="11.4" transform="rotate(-10 519.0 28.5)"/>
<rect x="476.2" y="67.0" width="11.4" height="16.2" transform="rotate(-15 481.9 75.1)"/>
<rect x="538.1" y="53.3" width="11.4" height="15.2" transform="rotate(-10 543.8 60.9)"/>
<rect x="539.0" y="68.5" width="11.4" height="9.5" transform="rotate(-20 544.7 73.2)"/>
<rect x="551.4" y="94.1" width="9.5" height="5.7" transform="rotate(-15 556.1 97.0)"/>
<rect x="658.8" y="25.7" width="11.4" height="13.3" transform="rotate(-20 664.5 32.3)"/>
<rect x="650.3" y="38.0" width="9.5" height="7.6" transform="rotate(-15 655.0 41.8)"/>
<rect x="677.8" y="2.9" width="9.5" height="11.4" transform="rotate(-15 682.6 8.6)"/>
<rect x="684.5" y="19.0" width="9.5" height="9.5" transform="rotate(-10 689.3 23.8)"/>
<rect x="661.2" y="81.3" width="12.4" height="8.6" transform="rotate(-5 667.4 85.6)"/>
<rect x="689.7" y="84.6" width="10.5" height="7.6" transform="rotate(-10 695.0 88.4)"/>
<rect x="675.9" y="116.0" width="19.0" height="13.3" transform="rotate(-5 685.5 122.7)"/>
<rect x="678.3" y="65.6" width="8.6" height="5.7" transform="rotate(-15 682.6 68.5)"/>
<rect x="698.3" y="59.0" width="8.6" height="5.7" transform="rotate(-15 702.6 61.8)"/>
<rect x="710.7" y="54.2" width="8.6" height="5.7" transform="rotate(-15 714.9 57.1)"/>
<rect x="461.0" y="77.0" width="9.5" height="9.5" transform="rotate(-20 465.8 81.8)"/>
</g>
<g fill="none" stroke="#838383" stroke-width="1">
<polyline points="0.0,8.6 25.9,0.0"/>
<polyline points="0.0,28.1 73.5,0.0"/>
<polyline points="0.0,50.6 127.5,0.0"/>
<polyline points="0.0,83.0 500.1,-112.4"/>
<polyline points="0.0,129.7 500.1,-77.8"/>
<polyline points="0.0,170.7 453.8,-13.0"/>
<polyline points="0.0,198.8 479.7,0.0"/>
<polyline points="0.0,248.5 250.7,146.9"/>
<polyline points="116.7,181.5 242.0,131.8"/>
<polyline points="116.7,181.5 123.2,201.0"/>
<polyline points="0.0,270.1 190.2,449.9"/>
<polyline points="0.0,298.2 172.9,449.9"/>
<polyline points="32.4,293.9 229.1,224.7"/>
<polyline points="41.1,302.5 229.1,233.4"/>
<polyline points="49.7,309.0 229.1,242.0"/>
<polyline points="56.2,317.7 229.1,250.7"/>
<polyline points="69.2,332.8 229.1,268.0"/>
<polyline points="0.0,369.5 60.5,341.4 233.4,276.6"/>
<polyline points="103.7,354.4 203.1,317.7"/>
<polyline points="43.2,363.0 108.0,449.9"/>
<polyline points="134.0,380.3 198.8,358.7"/>
<polyline points="196.7,0.0 252.8,149.1 185.8,419.2 188.0,449.9"/>
<polyline points="213.9,0.0 276.6,121.0 287.4,110.2 371.7,80.0"/>
<polyline points="276.6,121.0 261.5,181.5 192.3,408.4 196.7,449.9"/>
<polyline points="369.5,80.0 500.1,233.4"/>
<polyline points="393.3,71.3 500.1,207.5"/>
<polyline points="255.0,280.9 500.1,155.6"/>
<polyline points="252.8,319.8 500.1,203.1"/>
<polyline points="192.3,408.4 500.1,259.3"/>
<polyline points="360.9,244.2 389.0,285.3"/>
<polyline points="250.7,317.7 276.6,371.7"/>
<polyline points="410.6,255.0 440.8,302.5"/>
<polyline points="326.3,406.3 500.1,302.5"/>
<polyline points="276.6,449.9 500.1,328.5"/>
<polyline points="421.4,319.8 500.1,268.0"/>
<polyline points="445.2,371.7 500.1,345.8"/>
<polyline points="425.7,337.1 449.5,376.0 500.1,358.7"/>
<polyline points="302.5,367.4 328.5,449.9"/>
<polyline points="367.4,268.0 432.2,367.4 453.8,449.9"/>
<polyline points="250.7,397.6 276.6,449.9"/>
<polyline points="776.7,0.0 787.5,138.3 759.4,203.2 748.6,389.1 761.5,450.0"/>
<polyline points="798.3,0.0 798.3,138.3 768.0,198.9 757.2,242.1 757.2,371.8 776.7,450.0"/>
<polyline points="692.4,138.3 718.3,172.9 733.4,198.9 750.7,196.7 787.5,138.3"/>
<polyline points="932.3,0.0 895.6,164.3 899.9,181.6 885.6,237.8 867.0,250.3 861.8,272.8 871.8,348.0 864.4,373.1 877.0,397.7 874.4,432.7 889.5,447.9 921.9,458.2"/>
<polyline points="936.6,0.0 902.0,164.3 906.4,181.6 889.5,240.4 871.8,251.6 868.3,272.8 875.7,352.8 867.0,375.2 880.9,395.6 879.6,430.1 892.1,445.3 921.9,452.6"/>
<polyline points="944.4,380.4 1062.0,424.1"/>
<polyline points="944.4,384.7 1062.0,428.4"/>
<polyline points="762.0,202.7 898.1,202.7"/>
<polyline points="909.4,447.9 1011.8,250.7"/>
<polyline points="833.3,161.7 833.3,202.7"/>
<polyline points="692.4,138.3 724.8,151.3 891.2,166.4 1003.6,160.0 1062.0,164.3"/>
<polyline points="690.2,149.1 724.8,160.8 897.7,170.8 1062.0,172.9"/>
<polyline points="932.3,168.6 1010.1,248.6 1062.0,250.7"/>
<polyline points="936.6,168.6 1014.4,242.1 1062.0,244.2"/>
<polyline points="992.8,0.0 990.7,153.5 988.5,188.1 1025.2,190.2 1028.3,164.3"/>
<polyline points="1036.1,0.0 1029.6,164.3"/>
<polyline points="1057.7,0.0 1053.3,164.3"/>
<polyline points="932.3,38.9 992.8,134.0"/>
<polyline points="945.3,8.6 992.8,58.4"/>
<polyline points="919.3,82.1 988.5,142.7"/>
<polyline points="720.5,19.5 781.0,8.6"/>
<polyline points="794.0,30.3 923.7,10.8"/>
<polyline points="791.8,64.8 915.0,54.0"/>
<polyline points="794.0,103.8 921.5,92.9"/>
<polyline points="852.3,103.8 854.5,151.3"/>
<polyline points="759.4,229.1 884.7,224.8"/>
<polyline points="759.4,259.4 871.8,246.4"/>
<polyline points="759.4,285.3 871.8,272.3"/>
<polyline points="759.4,319.9 871.8,298.3"/>
<polyline points="759.4,345.8 871.8,332.9"/>
<polyline points="759.4,380.4 871.8,363.1"/>
<polyline points="763.7,432.3 876.1,402.0"/>
<polyline points="724.8,211.8 748.6,268.0"/>
<polyline points="683.7,294.0 748.6,268.0"/>
<polyline points="683.7,294.0 692.4,306.9 683.7,332.9 716.1,432.3"/>
<polyline points="642.7,450.0 759.4,367.5"/>
<polyline points="651.3,450.0 763.7,376.1"/>
<polyline points="988.5,376.1 1031.7,255.1"/>
<polyline points="966.9,389.1 1014.4,250.7"/>
<polyline points="1010.1,389.1 1049.0,255.1"/>
<polyline points="1029.6,354.5 1062.0,255.1"/>
<polyline points="966.9,311.3 997.1,317.7"/>
<polyline points="500.0,224.8 556.2,337.2 599.4,450.0"/>
<polyline points="500.0,259.4 547.6,345.8 586.5,450.0"/>
<polyline points="560.5,345.8 599.4,345.8"/>
<polyline points="595.1,363.1 629.7,450.0"/>
<polyline points="681.6,432.3 759.4,450.0"/>
<polyline points="802.6,164.3 806.9,203.2"/>
<polyline points="0.0,444.6 101.6,567.0"/>
<polyline points="0.0,460.1 95.0,573.2"/>
<polyline points="26.5,438.0 119.3,551.5"/>
<polyline points="102.5,438.0 176.7,527.2"/>
<polyline points="136.9,537.4 192.1,525.0"/>
<polyline points="141.3,546.2 193.0,533.8"/>
<polyline points="136.9,537.4 61.8,601.4"/>
<polyline points="141.3,546.2 64.0,614.7"/>
<polyline points="106.0,574.9 165.6,667.7"/>
<polyline points="112.6,572.7 167.8,658.9"/>
<polyline points="139.1,548.4 167.8,603.6 220.8,667.7"/>
<polyline points="167.0,603.6 205.4,586.9"/>
<polyline points="171.4,438.0 192.1,524.1 218.6,612.5 234.1,667.7"/>
<polyline points="183.3,438.0 194.3,473.3 206.7,526.3 223.1,592.6 242.9,667.7"/>
<polyline points="216.4,438.0 250.0,561.7"/>
<polyline points="0.0,526.3 61.8,601.4"/>
<polyline points="0.0,539.6 50.8,599.2"/>
<polyline points="0.0,627.9 42.8,600.5 53.0,600.5"/>
<polyline points="0.0,639.0 44.2,609.4 55.2,621.3 53.0,634.6"/>
<polyline points="61.8,614.7 110.4,667.7"/>
<polyline points="6.6,667.7 68.5,624.4"/>
<polyline points="46.4,667.7 83.9,639.9"/>
<polyline points="90.5,667.7 101.6,658.9"/>
<polyline points="220.8,468.9 353.4,468.9"/>
<polyline points="229.7,482.2 265.0,650.0"/>
<polyline points="247.4,482.2 287.1,645.6"/>
<polyline points="265.0,482.2 309.2,641.2"/>
<polyline points="282.7,482.2 331.3,636.8"/>
<polyline points="300.4,477.8 348.9,632.3"/>
<polyline points="318.0,473.3 357.8,627.9"/>
<polyline points="242.9,557.3 388.7,535.2"/>
<polyline points="240.7,544.0 388.7,526.3"/>
<polyline points="247.4,667.7 335.7,632.3 500.0,544.0"/>
<polyline points="203.2,791.4 419.6,676.5"/>
<polyline points="207.6,804.6 424.0,689.8"/>
<polyline points="212.0,813.4 220.8,844.4 500.0,711.9"/>
<polyline points="309.2,897.8 500.0,773.7"/>
<polyline points="379.9,897.8 500.0,817.9"/>
<polyline points="309.2,738.4 406.4,800.2"/>
<polyline points="353.4,658.9 432.9,853.2"/>
<polyline points="207.6,879.7 309.2,817.9"/>
<polyline points="265.0,897.8 397.5,826.7"/>
<polyline points="344.5,438.0 362.2,517.5 379.9,588.2"/>
<polyline points="371.0,438.0 388.7,526.3 401.9,583.8"/>
<polyline points="335.7,658.9 366.6,747.2 384.3,773.7"/>
<polyline points="326.9,650.0 379.9,773.7 410.8,817.9"/>
<polyline points="410.8,592.6 500.0,544.0"/>
<polyline points="410.8,605.8 500.0,557.3"/>
<polyline points="397.5,623.5 500.0,570.5"/>
<polyline points="432.9,672.1 500.0,636.8"/>
<polyline points="441.7,703.0 500.0,672.1"/>
<polyline points="450.5,742.8 500.0,711.9"/>
<polyline points="375.4,711.9 500.0,650.0"/>
<polyline points="424.0,438.0 500.0,499.8"/>
<polyline points="500.0,835.5 676.7,773.7"/>
<polyline points="544.2,897.8 698.8,800.2"/>
<polyline points="623.7,897.8 747.4,813.4"/>
<polyline points="500.0,791.4 588.3,747.2"/>
<polyline points="1272.1,627.9 1289.8,513.1"/>
<polyline points="1289.8,627.9 1320.7,451.3"/>
<polyline points="1311.9,521.9 1342.8,521.9 1333.9,627.9"/>
<polyline points="1139.6,632.3 1294.2,627.9 1485.0,654.4"/>
<polyline points="1139.6,645.6 1294.2,639.0 1485.0,663.3"/>
<polyline points="1144.0,703.0 1294.2,711.9 1485.0,729.5"/>
<polyline points="985.0,711.9 1144.0,720.7 1294.2,729.5 1485.0,747.2"/>
<polyline points="1152.8,738.4 1294.2,747.2 1373.7,773.7"/>
<polyline points="1152.8,791.4 1205.8,804.6 1294.2,813.4"/>
<polyline points="985.0,760.4 1073.3,773.7"/>
<polyline points="985.0,800.2 1117.5,809.0"/>
<polyline points="985.0,844.4 1144.0,822.3 1294.2,835.5"/>
<polygon points="1356.0,566.1 1422.3,574.9 1417.9,636.8 1356.0,627.9"/>
<polygon points="1435.5,464.5 1485.0,464.5 1485.0,645.6 1431.1,636.8"/>
<polyline points="1382.5,650.0 1485.0,676.5"/>
<polyline points="1373.7,720.7 1485.0,711.9"/>
<polyline points="1382.5,756.0 1485.0,782.5"/>
<polyline points="1404.6,791.4 1485.0,826.7"/>
<polyline points="1294.2,826.7 1485.0,862.0"/>
<polyline points="1152.8,650.0 1130.8,897.8"/>
<polyline points="1174.9,650.0 1157.3,747.2"/>
<polyline points="1205.8,650.0 1197.0,720.7"/>
<polyline points="1232.4,645.6 1223.5,711.9"/>
<polyline points="1258.9,645.6 1250.0,711.9"/>
<polyline points="1311.9,650.0 1303.0,720.7"/>
<polyline points="1338.4,654.4 1333.9,720.7"/>
<polyline points="1364.9,654.4 1360.4,725.1"/>
<polyline points="985.0,897.8 1073.3,826.7"/>
<polyline points="1232.4,897.8 1294.2,835.5"/>
<polyline points="1338.4,897.8 1382.5,835.5"/>
<polyline points="985.0,729.5 1051.3,747.2 1086.6,756.0"/>
<polyline points="985.0,747.2 1038.0,773.7"/>
<polyline points="1152.8,738.4 1148.4,791.4 1205.8,804.6"/>
<polyline points="1294.2,747.2 1289.8,813.4"/>
<polyline points="1382.5,658.9 1378.1,711.9"/>
<polyline points="1409.0,663.3 1404.6,720.7"/>
<polyline points="1435.5,667.7 1431.1,725.1"/>
<polyline points="1462.0,672.1 1457.6,729.5"/>
<polyline points="1232.4,747.2 1227.9,809.0"/>
<polyline points="1258.9,747.2 1254.4,813.4"/>
<polyline points="1183.8,742.8 1179.3,800.2"/>
<polyline points="539.1,438.0 593.7,490.1"/>
<polyline points="500.0,474.5 531.2,438.0"/>
<polyline points="500.0,503.1 585.9,438.0"/>
<polyline points="500.0,537.0 635.4,438.0"/>
<polyline points="515.6,599.4 682.3,477.1"/>
<polyline points="539.1,641.1 734.4,497.9"/>
<polyline points="604.2,667.9 786.4,531.7"/>
<polyline points="666.7,641.1 794.8,547.4"/>
<polyline points="760.4,607.3 903.6,516.1"/>
<polyline points="807.3,630.7 942.7,537.0"/>
<polyline points="500.0,583.8 565.1,667.9"/>
<polyline points="565.1,505.7 666.7,638.5"/>
<polyline points="596.3,482.3 742.2,667.9"/>
<polyline points="609.4,471.9 760.4,667.9"/>
<polyline points="656.2,487.5 812.5,667.9"/>
<polyline points="677.1,487.5 828.1,667.9"/>
<polyline points="697.9,451.0 794.8,568.2"/>
<polyline points="734.4,482.3 848.9,607.3"/>
<polyline points="773.4,438.0 812.5,497.9 835.9,550.0 880.2,594.2"/>
<polyline points="786.4,438.0 822.9,495.3 846.3,547.4 890.6,589.0"/>
<polyline points="877.6,438.0 942.7,497.9 981.7,542.2"/>
<polyline points="888.0,438.0 947.9,492.7 940.1,513.5 981.7,542.2"/>
<polyline points="599.0,448.4 635.4,448.4 656.2,438.0"/>
<polyline points="635.4,448.4 705.7,438.0"/>
<polyline points="718.7,438.0 750.0,484.9"/>
<polyline points="812.5,438.0 794.8,477.1"/>
<polyline points="916.6,438.0 906.2,453.6 942.7,497.9"/>
<polyline points="864.6,469.2 916.6,458.8"/>
<polyline points="864.6,516.1 942.7,487.5"/>
<polyline points="755.2,505.7 794.8,482.3"/>
<polyline points="851.5,568.2 942.7,516.1"/>
<polyline points="942.7,438.0 1000.0,453.6"/>
<polyline points="968.7,537.0 1000.0,464.0"/>
<polyline points="921.8,667.9 979.1,542.2"/>
<polyline points="942.7,667.9 1000.0,547.4"/>
<polyline points="851.5,638.5 890.6,615.1"/>
<polyline points="773.4,667.9 794.8,659.3"/>
<polyline points="500.0,620.3 559.9,576.0"/>
<polyline points="500.0,654.1 539.1,630.7"/>
<polyline points="552.1,667.9 617.2,620.3"/>
<polyline points="656.2,607.3 635.4,667.9"/>
<polyline points="708.3,599.4 682.3,667.9"/>
<polyline points="500.0,673.2 645.8,777.4 760.4,809.9 1000.0,884.1"/>
<polyline points="500.0,683.6 645.8,785.2 760.4,816.4 1000.0,891.9"/>
<polyline points="635.4,798.2 760.4,821.6 1000.0,897.9"/>
<polyline points="682.3,808.6 760.4,826.8 968.7,897.9"/>
<polyline points="500.0,694.0 604.2,753.9"/>
<polyline points="500.0,714.9 578.1,767.0"/>
<polyline points="604.2,668.0 697.9,761.7"/>
<polyline points="661.4,668.0 729.2,722.7"/>
<polyline points="708.3,696.6 760.4,668.0"/>
<polyline points="729.2,722.7 786.4,668.0"/>
<polyline points="682.3,735.7 760.4,668.0"/>
<polyline points="617.2,780.0 708.3,668.0"/>
<polyline points="500.0,790.4 609.4,735.7"/>
<polyline points="578.1,897.9 734.4,767.0 794.8,714.9"/>
<polyline points="533.9,897.9 666.7,803.4"/>
<polyline points="617.2,897.9 682.3,837.3"/>
<polyline points="760.4,897.9 812.5,759.1"/>
<polyline points="781.2,897.9 838.5,767.0"/>
<polyline points="802.1,897.9 859.4,767.0"/>
<polyline points="822.9,897.9 877.6,767.0"/>
<polyline points="843.7,897.9 895.8,767.0"/>
<polyline points="864.6,897.9 916.6,767.0"/>
<polyline points="885.4,897.9 937.5,767.0"/>
<polyline points="906.2,897.9 958.3,772.2"/>
<polyline points="812.5,759.1 846.3,668.0"/>
<polyline points="838.5,767.0 869.8,681.0"/>
<polyline points="859.4,767.0 890.6,688.8"/>
<polyline points="877.6,767.0 906.2,694.0"/>
<polyline points="895.8,767.0 927.1,696.6"/>
<polyline points="916.6,767.0 942.7,704.5"/>
<polyline points="786.4,678.4 1000.0,735.7"/>
<polyline points="786.4,694.0 1000.0,751.3"/>
<polyline points="942.7,772.2 1000.0,790.4"/>
<polyline points="968.7,897.9 1000.0,824.2"/>
<polyline points="677.1,678.4 687.5,701.9 708.3,691.4"/>
<polyline points="630.2,668.0 622.4,683.6"/>
<polyline points="565.1,668.0 500.0,699.2"/>
<polyline points="500.0,733.1 585.9,772.2"/>
<polygon points="546.9,735.7 546.9,753.9 567.7,753.9 567.7,735.7"/>
<polyline points="656.2,824.2 619.8,881.5 645.8,897.9"/>
<polyline points="645.8,850.3 708.3,834.7 721.3,865.9"/>
<polyline points="729.2,855.5 760.4,839.9"/>
<polyline points="507.8,897.9 572.9,837.3"/>
<polyline points="559.9,897.9 635.4,829.4"/>
<polyline points="1030.4,448.0 963.8,658.0"/>
<polyline points="1058.6,448.0 992.1,658.0"/>
<polyline points="1080.8,448.0 1015.3,658.0"/>
<polyline points="1105.0,448.0 1040.5,658.0"/>
<polyline points="1127.2,448.0 1062.7,658.0"/>
<polyline points="1145.4,448.0 1078.8,658.0"/>
<polyline points="1173.6,448.0 1111.1,658.0"/>
<polyline points="1198.8,448.0 1135.3,658.0"/>
<polyline points="1222.0,448.0 1157.5,658.0"/>
<polyline points="1242.2,448.0 1181.7,658.0"/>
<polyline points="1262.0,454.1 1199.8,658.0"/>
<polyline points="1127.2,449.0 1262.0,491.4"/>
<polyline points="1124.2,452.0 1262.0,495.4"/>
<polyline points="982.0,546.8 1137.3,634.6 1262.0,625.5"/>
<polyline points="982.0,550.9 1135.3,638.6 1262.0,629.5"/>
<polyline points="1127.2,512.5 1169.6,525.7"/>
<polyline points="1113.1,552.9 1155.5,566.0"/>
<polyline points="1175.6,519.6 1214.0,532.7"/>
<polyline points="1214.0,532.7 1207.9,569.0"/>
<polyline points="1165.5,534.7 1169.6,532.7"/>
<polyline points="0.0,671.8 59.9,658.0"/>
<polyline points="0.0,702.9 103.7,658.0"/>
<polyline points="23.1,713.3 69.2,683.4 127.9,658.0"/>
<polyline points="69.2,683.4 131.4,754.8"/>
<polyline points="103.7,658.0 161.3,727.1"/>
<polyline points="126.8,681.0 138.3,692.6"/>
<polyline points="149.8,658.0 177.5,688.0 189.0,704.1"/>
<polyline points="161.3,658.0 214.4,681.0 237.4,671.8"/>
<polyline points="0.0,727.1 126.8,768.6"/>
<polyline points="0.0,766.3 92.2,791.7 115.2,796.3"/>
<polyline points="0.0,796.3 43.8,830.9 50.7,828.6 69.2,803.2 92.2,794.0"/>
<polyline points="114.1,769.8 236.3,667.2"/>
<polyline points="126.8,789.4 244.3,694.9 322.0,644.2"/>
<polyline points="115.2,768.6 125.6,789.4 179.8,851.6 248.9,888.5 276.6,898.0"/>
<polyline points="103.7,787.1 115.2,796.3 191.3,847.0 322.0,898.0"/>
<polyline points="92.2,791.7 106.0,787.1 115.2,796.3"/>
<polyline points="0.0,860.8 94.5,791.7"/>
<polyline points="0.0,898.0 124.5,791.7"/>
<polyline points="201.7,795.1 322.0,741.0"/>
<polyline points="205.1,805.5 322.0,752.5"/>
<polyline points="208.6,817.0 322.0,766.3"/>
<polyline points="220.1,849.3 322.0,794.0"/>
<polyline points="201.7,795.1 208.6,817.0 220.1,849.3 237.4,842.4"/>
<polyline points="89.9,898.0 140.6,851.6"/>
<polyline points="142.9,898.0 168.3,867.8"/>
<polyline points="46.1,870.1 101.4,819.4"/>
<polyline points="221.3,849.3 205.1,879.3"/>
<polyline points="179.8,851.6 322.0,837.8"/>
<polyline points="179.8,851.6 219.0,898.0"/>
<polyline points="0.0,828.6 36.9,819.4"/>
<polyline points="248.9,886.2 322.0,865.5"/>
<polyline points="101.4,819.4 106.0,824.0 149.8,898.0"/>
<polyline points="0.0,743.3 69.2,766.3"/>
<polyline points="442.0,37.1 573.2,0.0"/>
<polyline points="442.0,50.4 552.3,8.6 632.2,-19.0"/>
<polyline points="449.6,0.0 456.3,20.9 452.5,32.3 442.0,49.5"/>
<polyline points="459.1,0.0 464.8,18.1 476.2,24.7"/>
<polyline points="462.0,43.7 485.7,103.7"/>
<polyline points="487.6,34.2 510.5,93.2"/>
<polyline points="513.3,23.8 556.1,133.1"/>
<polyline points="531.4,16.2 588.5,163.6"/>
<polyline points="551.4,9.5 578.0,80.8"/>
<polyline points="442.0,64.7 461.0,114.1"/>
<polyline points="485.7,103.7 535.2,82.7"/>
<polyline points="442.0,123.6 547.6,113.2"/>
<polyline points="442.0,157.9 573.2,125.5"/>
<polyline points="559.0,88.4 578.0,80.8"/>
<polyline points="571.3,61.8 634.1,26.6"/>
<polyline points="535.2,142.7 549.5,179.7 565.6,175.0"/>
<polyline points="588.5,163.6 603.7,157.9 609.4,171.2"/>
<polyline points="624.6,0.0 646.5,51.4 712.1,23.8 722.0,19.0"/>
<polyline points="629.3,0.0 648.4,50.4"/>
<polyline points="658.8,0.0 673.1,39.9"/>
<polyline points="689.3,0.0 699.7,28.5"/>
<polyline points="712.1,23.8 722.0,49.5"/>
<polyline points="646.5,51.4 651.2,77.0 722.0,62.8"/>
<polyline points="542.8,198.0 691.2,136.9 722.0,148.4"/>
<polyline points="691.2,136.9 704.5,163.6 717.8,198.0"/>
<polyline points="442.0,161.7 462.9,198.0"/>
<polyline points="547.6,113.2 554.2,133.1"/>
</g>
<g fill="none" stroke="#bdbdbd" stroke-width="3.2" stroke-dasharray="16 9">
<polyline points="213.9,13.0 248.5,101.6 276.6,121.0"/>
<polyline points="270.1,125.3 229.1,298.2 188.0,445.2"/>
<polyline points="328.5,414.9 500.1,298.2"/>
<polyline points="488.4,220.4 500.1,242.0"/>
<polyline points="692.4,142.7 724.8,155.6 893.4,168.6"/>
<polyline points="932.3,4.3 895.6,164.3"/>
<polyline points="500.0,207.5 569.2,181.6 649.1,157.8"/>
<polyline points="500.0,287.5 521.6,281.0"/>
<polyline points="189.9,468.9 207.6,539.6 234.1,627.9 247.4,658.9"/>
<polyline points="194.3,473.3 207.6,526.3 238.5,521.9"/>
<polyline points="225.3,471.1 353.4,471.1 353.4,438.0"/>
<polyline points="1139.6,639.0 1294.2,632.3 1485.0,658.9"/>
<polyline points="1139.6,639.0 1126.3,720.7 1095.4,826.7"/>
<polyline points="1137.3,636.6 1262.0,627.5"/>
<polyline points="83.0,828.6 126.8,789.4 219.0,706.4 237.4,697.2 244.3,678.7"/>
<polyline points="0.0,750.2 46.1,765.2 69.2,772.1 96.8,770.9 115.2,769.8 125.6,789.4 179.8,851.6 195.9,860.8"/>
<polyline points="207.5,867.8 230.5,879.3 276.6,898.0"/>
<polyline points="9.2,898.0 83.0,828.6"/>
<polyline points="691.2,137.9 722.0,150.3"/>
</g>
<g font-family="Liberation Sans" font-style="italic" font-size="10.5" fill="#7e7e7e">
<text x="2.2" y="17.3">10</text>
<text x="6.5" y="34.6">11</text>
<text x="15.1" y="60.5">12</text>
<text x="21.6" y="97.2">76/14</text>
<text x="45.4" y="131.0">15</text>
<text x="55.3" y="162.1">16</text>
<text x="157.8" y="175.0">3</text>
<text x="64.8" y="194.5">77/17</text>
<text x="88.6" y="240.7">78/20</text>
<text x="108.0" y="263.6">21</text>
<text x="113.2" y="273.2">22</text>
<text x="118.0" y="283.1">23</text>
<text x="122.3" y="293.0">24</text>
<text x="127.9" y="306.9">25</text>
<text x="146.1" y="349.2">26</text>
<text x="165.5" y="378.2">27</text>
<text x="101.6" y="408.4">55</text>
<text x="56.2" y="434.4">54</text>
<text x="253.7" y="126.2">65</text>
<text x="311.2" y="113.2">92/62</text>
<text x="313.3" y="172.9">91/62</text>
<text x="309.5" y="278.8">207</text>
<text x="340.1" y="319.8">87</text>
<text x="230.4" y="355.7">71</text>
<text x="352.2" y="352.2">76</text>
<text x="378.2" y="363.0">75/2</text>
<text x="388.1" y="389.0">15</text>
<text x="443.0" y="418.4">12</text>
<text x="384.7" y="436.5">13</text>
<text x="304.7" y="419.2">73/3</text>
<text x="259.3" y="441.7">73/4</text>
<text x="276.6" y="446.0">73/5</text>
<text x="443.0" y="284.0">77</text>
<text x="481.9" y="296.1">78</text>
<text x="437.4" y="327.6">75/1</text>
<text x="464.6" y="339.3">16</text>
<text x="422.7" y="226.0">64</text>
<text x="381.6" y="253.7">65</text>
<text x="420.1" y="85.1">60</text>
<text x="453.8" y="70.0">59</text>
<text x="484.1" y="62.7">58</text>
<text x="480.6" y="120.2">200</text>
<text x="434.4" y="172.0">86</text>
<text x="328.5" y="8.6">10</text>
<text x="340.1" y="32.4">11</text>
<text x="350.9" y="57.5">12</text>
<text x="315.5" y="371.7">74</text>
<text x="492.7" y="399.8">25</text>
<text x="588.6" y="15.1">54</text>
<text x="637.5" y="9.5">50/3</text>
<text x="660.8" y="9.5">50/4</text>
<text x="642.7" y="30.3">50/2</text>
<text x="506.5" y="57.1">57</text>
<text x="526.8" y="45.4">56</text>
<text x="547.6" y="44.1">55</text>
<text x="668.6" y="98.6">52/1</text>
<text x="551.9" y="154.8">52/2</text>
<text x="500.0" y="168.6">201</text>
<text x="743.0" y="33.7">48</text>
<text x="819.9" y="33.7">203</text>
<text x="853.6" y="36.7">204</text>
<text x="822.1" y="49.7">202</text>
<text x="858.8" y="81.3">45</text>
<text x="865.3" y="120.2">46/1</text>
<text x="836.3" y="140.5">208</text>
<text x="826.4" y="155.6">85</text>
<text x="928.0" y="128.8">67</text>
<text x="953.9" y="55.3">503</text>
<text x="949.6" y="96.0">504</text>
<text x="1004.9" y="75.7">500</text>
<text x="1035.2" y="85.6">70</text>
<text x="921.5" y="159.1">68</text>
<text x="711.8" y="168.6">20</text>
<text x="743.0" y="172.1">21</text>
<text x="839.8" y="182.9">2978</text>
<text x="810.4" y="214.0">51</text>
<text x="745.5" y="222.6">19</text>
<text x="736.9" y="243.0">22</text>
<text x="806.9" y="241.2">50</text>
<text x="819.9" y="263.7">547</text>
<text x="721.3" y="280.1">23</text>
<text x="735.6" y="288.8">24</text>
<text x="812.6" y="289.6">49</text>
<text x="825.1" y="319.9">48</text>
<text x="621.9" y="275.8">18</text>
<text x="730.0" y="340.7">27</text>
<text x="690.2" y="345.8">25</text>
<text x="698.0" y="366.6">26</text>
<text x="823.4" y="352.3">2832</text>
<text x="836.3" y="396.0">2833</text>
<text x="872.6" y="378.3">36</text>
<text x="922.4" y="284.5">2834</text>
<text x="1002.8" y="205.3">69</text>
<text x="998.0" y="283.2">65</text>
<text x="970.3" y="342.4">66</text>
<text x="992.8" y="337.2">523</text>
<text x="1015.3" y="344.5">522</text>
<text x="1031.7" y="354.5">521</text>
<text x="1046.9" y="359.7">520</text>
<text x="835.0" y="440.1">47</text>
<text x="956.1" y="446.1">55</text>
<text x="695.4" y="432.3">2531</text>
<text x="657.8" y="444.4">2532</text>
<text x="560.5" y="388.2">11</text>
<text x="500.0" y="402.0">534</text>
<text x="547.6" y="428.8">2533</text>
<text x="21.2" y="457.9">53</text>
<text x="9.7" y="468.0">52</text>
<text x="178.9" y="456.6">66</text>
<text x="233.2" y="454.8">73/1</text>
<text x="276.1" y="444.6">73/5</text>
<text x="255.3" y="462.3">635</text>
<text x="195.7" y="473.3">101/72</text>
<text x="360.0" y="456.6">14</text>
<text x="360.0" y="472.5">630</text>
<text x="363.1" y="480.0">629</text>
<text x="367.5" y="487.5">628</text>
<text x="371.9" y="496.3">627</text>
<text x="376.3" y="505.1">626</text>
<text x="380.7" y="513.1">625</text>
<text x="370.1" y="524.6">624</text>
<text x="388.7" y="530.8">2661</text>
<text x="392.2" y="547.5">2662</text>
<text x="416.1" y="546.2">5</text>
<text x="367.5" y="577.1">4</text>
<text x="256.2" y="490.1">634</text>
<text x="260.6" y="503.4">633</text>
<text x="230.6" y="510.9">639</text>
<text x="236.3" y="528.5">640</text>
<text x="270.3" y="526.3">631</text>
<text x="240.7" y="537.4">641</text>
<text x="280.5" y="540.5">17</text>
<text x="311.4" y="558.1">632</text>
<text x="327.7" y="552.8">642</text>
<text x="189.0" y="565.2">33</text>
<text x="228.8" y="563.9">28</text>
<text x="229.7" y="591.7">30</text>
<text x="261.5" y="605.0">1</text>
<text x="282.7" y="597.0">2</text>
<text x="334.4" y="587.3">3</text>
<text x="187.7" y="630.1">32</text>
<text x="103.8" y="628.8">35</text>
<text x="145.8" y="633.2">71/34</text>
<text x="161.2" y="650.0">70/34</text>
<text x="250.9" y="658.9">31</text>
<text x="255.3" y="672.1">29</text>
<text x="327.7" y="641.2">662/2</text>
<text x="379.9" y="618.2">2702</text>
<text x="366.6" y="624.4">2701</text>
<text x="399.7" y="608.1">789/24</text>
<text x="424.0" y="611.1">789/23</text>
<text x="446.1" y="624.4">789/21</text>
<text x="468.2" y="640.3">789/44</text>
<text x="404.2" y="653.1">2759</text>
<text x="368.8" y="668.6">2760</text>
<text x="428.4" y="661.1">2741</text>
<text x="437.3" y="670.3">2740</text>
<text x="443.9" y="678.7">2704</text>
<text x="342.3" y="689.8">1577/679</text>
<text x="406.4" y="696.4">2759</text>
<text x="417.4" y="719.8">2142/680</text>
<text x="468.2" y="709.6">2705</text>
<text x="357.8" y="727.3">1578/680</text>
<text x="368.8" y="740.6">1679/688</text>
<text x="386.5" y="753.8">1580/684</text>
<text x="356.9" y="755.1">682</text>
<text x="361.3" y="767.1">685</text>
<text x="424.0" y="744.1">2144/686</text>
<text x="419.6" y="778.1">2097/694</text>
<text x="455.0" y="789.2">2148/699</text>
<text x="313.6" y="824.5">2096/690</text>
<text x="474.8" y="822.3">2795</text>
<text x="363.1" y="844.4">1747/698</text>
<text x="334.8" y="862.0">1748/701</text>
<text x="435.1" y="876.6">709</text>
<text x="47.7" y="611.1">68/1</text>
<text x="4.4" y="678.7">41/5</text>
<text x="22.1" y="695.1">41/4</text>
<text x="17.7" y="720.7">40/1</text>
<text x="103.8" y="705.2">37</text>
<text x="152.4" y="708.3">36</text>
<text x="196.6" y="708.3">67</text>
<text x="240.7" y="729.5">2095/663</text>
<text x="64.0" y="735.3">80/39</text>
<text x="0.0" y="743.7">72</text>
<text x="95.0" y="775.9">88/2</text>
<text x="81.7" y="783.4">88/3</text>
<text x="106.0" y="784.7">204</text>
<text x="13.3" y="786.9">208</text>
<text x="55.2" y="794.9">207</text>
<text x="88.3" y="802.4">96</text>
<text x="70.7" y="821.4">329</text>
<text x="105.1" y="830.2">330</text>
<text x="121.5" y="826.7">170/2</text>
<text x="154.6" y="821.4">1865/663</text>
<text x="6.6" y="831.1">206</text>
<text x="15.5" y="866.4">205</text>
<text x="205.4" y="771.5">1344/676</text>
<text x="286.2" y="794.9">1346/681</text>
<text x="242.9" y="806.8">1345/677</text>
<text x="224.4" y="867.3">1866/690</text>
<text x="266.3" y="878.4">1867/694</text>
<text x="300.4" y="880.6">1669/698</text>
<text x="292.8" y="892.1">1668/698</text>
<text x="35.3" y="897.4">328</text>
<text x="656.8" y="444.6">2532</text>
<text x="671.4" y="459.2">34</text>
<text x="716.4" y="457.9">2528</text>
<text x="747.4" y="480.0">2527</text>
<text x="807.0" y="486.6">28</text>
<text x="862.2" y="468.0">46</text>
<text x="906.4" y="495.4">42</text>
<text x="502.2" y="464.5">2535</text>
<text x="530.9" y="453.5">10</text>
<text x="588.3" y="471.1">662/1</text>
<text x="603.8" y="485.7">2589</text>
<text x="698.8" y="510.0">2526</text>
<text x="773.9" y="514.4">33</text>
<text x="804.8" y="533.0">32</text>
<text x="910.8" y="535.2">44</text>
<text x="926.2" y="548.4">2521</text>
<text x="742.9" y="540.9">2525</text>
<text x="566.3" y="518.8">2452</text>
<text x="632.5" y="524.1">2588</text>
<text x="636.9" y="532.1">2587</text>
<text x="641.3" y="541.8">2586</text>
<text x="533.1" y="539.6">2538</text>
<text x="608.2" y="545.3">789/76</text>
<text x="665.6" y="563.9">789/80</text>
<text x="581.7" y="579.3">2540</text>
<text x="617.1" y="585.1">2114/789</text>
<text x="634.7" y="597.9">789/79</text>
<text x="782.7" y="574.9">2338</text>
<text x="844.5" y="556.4">2524</text>
<text x="862.2" y="571.8">29</text>
<text x="875.4" y="559.5">30</text>
<text x="886.5" y="586.0">2522</text>
<text x="844.5" y="602.3">2523</text>
<text x="667.8" y="613.8">2542</text>
<text x="643.6" y="620.0">789/78</text>
<text x="570.7" y="628.8">2539</text>
<text x="526.5" y="616.9">2820</text>
<text x="533.1" y="652.2">789/49</text>
<text x="579.5" y="653.5">2196/789</text>
<text x="500.0" y="664.6">2197/789</text>
<text x="564.0" y="665.5">789/50</text>
<text x="665.6" y="667.7">2544</text>
<text x="696.6" y="663.3">1052/789</text>
<text x="696.6" y="675.2">1053/789</text>
<text x="736.3" y="679.6">2546</text>
<text x="678.9" y="686.7">2545</text>
<text x="656.8" y="704.3">2543</text>
<text x="745.1" y="711.0">2812</text>
<text x="758.4" y="742.8">2550</text>
<text x="767.2" y="727.3">2548</text>
<text x="811.4" y="747.2">2552</text>
<text x="820.2" y="671.2">2549</text>
<text x="848.9" y="712.7">2553</text>
<text x="899.7" y="706.6">35</text>
<text x="926.2" y="593.5">2517</text>
<text x="961.6" y="596.1">2515</text>
<text x="913.0" y="620.0">2518</text>
<text x="884.3" y="628.8">2519</text>
<text x="939.5" y="650.9">2516</text>
<text x="963.8" y="657.5">2514</text>
<text x="822.4" y="636.8">43</text>
<text x="707.6" y="764.0">2811</text>
<text x="729.7" y="778.1">2960</text>
<text x="769.4" y="772.8">2551</text>
<text x="800.4" y="763.1">2182/789</text>
<text x="848.9" y="770.2">2554</text>
<text x="795.9" y="782.5">2184/789</text>
<text x="791.5" y="791.4">2737</text>
<text x="756.2" y="799.3">2185/789</text>
<text x="866.6" y="786.9">2555</text>
<text x="888.7" y="780.3">2556</text>
<text x="913.0" y="794.9">2558</text>
<text x="893.1" y="803.7">2557</text>
<text x="952.7" y="768.4">2975</text>
<text x="919.6" y="817.0">2788</text>
<text x="939.5" y="820.1">2789</text>
<text x="955.0" y="832.0">2560</text>
<text x="716.4" y="809.0">2703</text>
<text x="681.1" y="805.5">Hag</text>
<text x="681.1" y="817.9">731/1</text>
<text x="639.1" y="760.4">1645/724</text>
<text x="641.3" y="767.1">2738</text>
<text x="663.4" y="767.1">724/1</text>
<text x="632.5" y="731.7">1644/724</text>
<text x="623.7" y="848.8">731/1</text>
<text x="645.8" y="862.0">726/2</text>
<text x="670.1" y="873.1">1998/727</text>
<text x="632.5" y="884.1">2917</text>
<text x="550.8" y="878.8">2102/719</text>
<text x="578.6" y="847.9">1261/721</text>
<text x="674.5" y="831.1">2166/789</text>
<text x="820.2" y="822.3">2712</text>
<text x="835.7" y="822.3">2736</text>
<text x="833.5" y="817.9">2735</text>
<text x="848.9" y="824.5">2734</text>
<text x="862.2" y="830.2">2733</text>
<text x="877.7" y="833.3">2732</text>
<text x="893.1" y="839.1">2731</text>
<text x="906.4" y="844.4">2730</text>
<text x="826.9" y="862.0">2726</text>
<text x="800.4" y="873.1">2727</text>
<text x="773.9" y="881.9">2725</text>
<text x="1018.1" y="481.3">538</text>
<text x="1040.2" y="491.9">537</text>
<text x="1062.3" y="503.4">536</text>
<text x="1077.8" y="535.2">535</text>
<text x="1096.3" y="543.1">534</text>
<text x="1197.0" y="497.6">57</text>
<text x="1235.9" y="497.6">61</text>
<text x="1125.5" y="572.7">56</text>
<text x="1222.6" y="574.0">529</text>
<text x="1256.6" y="566.1">58</text>
<text x="1292.0" y="530.8">2821</text>
<text x="1317.2" y="536.1">2822</text>
<text x="1285.4" y="572.7">2823</text>
<text x="1311.9" y="574.9">2824</text>
<text x="1261.1" y="606.7">520</text>
<text x="1415.7" y="517.5">2961</text>
<text x="1157.3" y="614.7">2787</text>
<text x="1117.5" y="618.2">40</text>
<text x="1146.2" y="634.6">2786</text>
<text x="1143.1" y="645.6">178179</text>
<text x="1188.2" y="644.7">1/19/17/18</text>
<text x="1007.1" y="623.5">2512</text>
<text x="1060.1" y="622.6">2509</text>
<text x="998.3" y="642.5">2513</text>
<text x="1053.5" y="635.9">2510</text>
<text x="1023.9" y="655.8">2511</text>
<text x="1042.4" y="660.2">2312</text>
<text x="1091.0" y="663.3">41</text>
<text x="1102.1" y="675.2">38</text>
<text x="1099.8" y="693.3">37</text>
<text x="1113.1" y="709.6">17</text>
<text x="1150.6" y="714.1">42</text>
<text x="1147.5" y="727.3">129</text>
<text x="1088.8" y="749.4">43</text>
<text x="1108.7" y="756.0">176</text>
<text x="1133.0" y="760.4">137</text>
<text x="1133.0" y="781.6">138</text>
<text x="1093.2" y="791.4">29/2</text>
<text x="1130.8" y="801.5">72</text>
<text x="1178.0" y="733.9">136</text>
<text x="1193.5" y="733.1">12</text>
<text x="1208.1" y="733.1">111</text>
<text x="1247.8" y="739.7">146</text>
<text x="1261.1" y="742.8">145</text>
<text x="1276.5" y="744.1">44</text>
<text x="1296.4" y="750.3">73</text>
<text x="1314.1" y="749.4">32</text>
<text x="1272.1" y="727.3">103</text>
<text x="1296.4" y="733.1">185</text>
<text x="1314.1" y="733.1">16</text>
<text x="1234.6" y="722.9">183</text>
<text x="1245.6" y="722.9">184</text>
<text x="1225.7" y="773.7">31/2</text>
<text x="1157.3" y="804.6">139</text>
<text x="1170.5" y="806.8">140</text>
<text x="1188.2" y="806.8">141</text>
<text x="1393.6" y="652.2">Nordring</text>
<text x="1444.4" y="656.6">45</text>
<text x="1466.5" y="657.5">191</text>
<text x="1393.6" y="678.7">1/3</text>
<text x="1426.7" y="673.0">2/2</text>
<text x="1415.7" y="685.4">187</text>
<text x="1448.8" y="687.6">190</text>
<text x="1340.6" y="667.7">233</text>
<text x="1318.5" y="664.2">234</text>
<text x="1287.6" y="639.0">1/71/14</text>
<text x="1269.9" y="668.6">1/5</text>
<text x="1289.8" y="668.6">2/10</text>
<text x="1289.8" y="680.9">1/0</text>
<text x="1294.2" y="689.8">02</text>
<text x="1214.7" y="676.5">182</text>
<text x="1192.6" y="681.8">181</text>
<text x="1170.5" y="672.1">180</text>
<text x="1391.4" y="751.6">46</text>
<text x="1409.0" y="757.3">188</text>
<text x="1428.9" y="760.4">189</text>
<text x="1444.4" y="767.1">192</text>
<text x="1422.3" y="778.1">40</text>
<text x="1455.4" y="785.6">38</text>
<text x="1386.9" y="805.9">35</text>
<text x="1382.5" y="833.3">37</text>
<text x="1384.7" y="846.6">130</text>
<text x="1329.5" y="795.8">33</text>
<text x="1311.9" y="820.1">34</text>
<text x="1322.9" y="830.2">27/2</text>
<text x="1243.4" y="832.4">28/11</text>
<text x="1267.7" y="837.7">28/12</text>
<text x="1289.8" y="837.7">27/3</text>
<text x="985.0" y="806.8">2561</text>
<text x="998.3" y="819.2">789/16</text>
<text x="985.0" y="848.8">789/17</text>
<text x="1002.7" y="879.7">2725</text>
<text x="1020.3" y="877.5">1079/789</text>
<text x="1027.0" y="760.4">789/15</text>
<text x="1057.9" y="751.6">789/18</text>
<text x="1053.5" y="779.4">789/19</text>
<text x="1038.0" y="826.7">2520</text>
<text x="1060.1" y="834.6">67/2</text>
<text x="985.0" y="760.4">15</text>
<text x="1356.0" y="740.6">186</text>
<text x="1362.7" y="747.2">1/2</text>
<text x="1188.2" y="862.0">239</text>
<text x="1205.8" y="864.2">235</text>
<text x="1135.2" y="875.3">150</text>
<text x="1161.7" y="881.9">152</text>
<text x="1190.4" y="895.2">236</text>
<text x="1294.2" y="824.5">143</text>
<text x="1311.9" y="877.5">240</text>
</g>
<g font-family="Liberation Sans" font-style="italic" fill="#7a7a7a">
<text x="259" y="198" font-size="15">An der</text>
<text x="239" y="214" font-size="15">Wiesengasse</text>
<text x="1031" y="429" font-size="14">Die</text>
<text x="992" y="445" font-size="14">Kohlhorstgasse</text>
<text font-size="11" font-style="normal" font-weight="bold" fill="#8c8c8c" transform="translate(474,32) rotate(-22)">Fischergasse</text>
<text font-size="11" font-style="normal" font-weight="bold" fill="#8c8c8c" transform="translate(672,421) rotate(-40)">Fischergasse</text>
<text font-size="11" font-style="normal" font-weight="bold" fill="#8c8c8c" transform="translate(404,108) rotate(62)">Wiesengasse</text>
<text font-size="11" font-style="normal" font-weight="bold" fill="#8c8c8c" transform="translate(250,387) rotate(-22)">Wiesen</text>
<text font-size="12" font-style="normal" font-weight="bold" fill="#8c8c8c" transform="translate(154,758) rotate(-40)">Torgauer Str.</text>
<text font-size="11" font-style="normal" font-weight="bold" fill="#8c8c8c" transform="translate(1392,652) rotate(3)">Nordring</text>
<text font-size="10" x="585" y="347" font-style="normal" font-weight="bold">Traderhalle</text>
</g>
<g fill="rgba(0,0,255,0.3)" stroke="rgba(20,20,90,0.55)" stroke-width="1">
<circle cx="292" cy="352" r="322"/>
<circle cx="664" cy="478" r="322"/>
<circle cx="622" cy="795" r="322"/>
<circle cx="1075" cy="853" r="322"/>
<circle cx="1363" cy="769" r="322"/>
<circle cx="977" cy="-183" r="322"/>
<circle cx="1542" cy="828" r="322"/>
<circle cx="1485" cy="1028" r="322"/>
<circle cx="1062" cy="1150" r="322"/>
<circle cx="1197" cy="1045" r="322"/>
</g>
<rect x="279.3" y="338.4" width="27" height="27" fill="none" stroke="#1414e6" stroke-width="3"/><circle cx="292.8" cy="351.9" r="10" fill="#e0506e" stroke="#3c3c38" stroke-width="2"/><circle cx="292.8" cy="352.9" r="6.2" fill="#880878" stroke="#e0506e" stroke-width="0.8" stroke-dasharray="1.5 1"/><text x="320.8" y="340.9" font-size="10.5" fill="#1010e0" font-family="Liberation Sans">2000 l/min</text><text x="311.8" y="364.9" font-size="10.5" fill="#1010e0" font-family="Liberation Sans">100 mm</text>
<rect x="651.3" y="464.4" width="27" height="27" fill="none" stroke="#1414e6" stroke-width="3"/><circle cx="664.8" cy="477.9" r="10" fill="#80a028" stroke="#3c3c38" stroke-width="2"/><circle cx="664.8" cy="478.9" r="6.2" fill="#90ae30" stroke="#80a028" stroke-width="0.8" stroke-dasharray="1.5 1"/><text x="692.8" y="466.9" font-size="10.5" fill="#1010e0" font-family="Liberation Sans">800 l/min</text><text x="683.8" y="490.9" font-size="10.5" fill="#1010e0" font-family="Liberation Sans">100 mm</text>
<rect x="609.3" y="781.4" width="27" height="27" fill="none" stroke="#1414e6" stroke-width="3"/><circle cx="622.8" cy="794.9" r="10" fill="#d8487a" stroke="#3c3c38" stroke-width="2"/><circle cx="622.8" cy="795.9" r="6.2" fill="#880878" stroke="#d8487a" stroke-width="0.8" stroke-dasharray="1.5 1"/><text x="650.8" y="783.9" font-size="10.5" fill="#1010e0" font-family="Liberation Sans">1200 l/min</text><text x="641.8" y="807.9" font-size="10.5" fill="#1010e0" font-family="Liberation Sans">100 mm</text>
<rect x="1062.3" y="839.4" width="27" height="27" fill="none" stroke="#1414e6" stroke-width="3"/><circle cx="1075.8" cy="852.9" r="10" fill="#a01070" stroke="#3c3c38" stroke-width="2"/><circle cx="1075.8" cy="853.9" r="6.2" fill="#900a70" stroke="#a01070" stroke-width="0.8" stroke-dasharray="1.5 1"/><text x="1103.8" y="841.9" font-size="10.5" fill="#1010e0" font-family="Liberation Sans">800 l/min</text><text x="1094.8" y="865.9" font-size="10.5" fill="#1010e0" font-family="Liberation Sans">100 mm</text>
<rect x="1350" y="756" width="26" height="26" fill="none" stroke="#1414e6" stroke-width="3"/>
<path d="M1356 762 v14 h14 v-14 M1363 776 v-4 M1360 764 h6" stroke="#1a1a80" stroke-width="1.5" fill="none"/>
<text x="1297" y="787" font-size="22" font-weight="bold" fill="rgba(20,20,120,0.5)" font-family="Liberation Sans">Flur</text>
<rect x="1351" y="862" width="95" height="35" rx="9" fill="#fff"/>
<text x="1379" y="879" font-size="15" fill="#2a9fd6" font-family="Liberation Sans">50 m</text>
<rect x="1358" y="884" width="80" height="6" fill="#2fb0e6"/>
<rect x="1378" y="885" width="18" height="4" fill="#d6ecf8"/>
<rect x="1418" y="885" width="18" height="4" fill="#d6ecf8"/>
</svg>
<div class="a" style="left:358px;top:102px;width:1485px;height:1px;background:#cfe3f5"></div>
<div class="a" style="left:358px;top:999px;width:1485px;height:1px;background:#cfe3f5"></div>
<div class="a" style="left:358px;top:1000px;width:1485px;height:30px;background:#fff"></div>
<svg class="a" style="left:358px;top:1000px" width="940" height="30" fill="none" stroke="#777" stroke-width="1.8">
<path d="M4 4 V28" stroke="#999" stroke-width="1" stroke-dasharray="1.5 2.5"/>
<rect x="18" y="5" width="5" height="5" rx="1" stroke-width="1.5"/><rect x="18" y="12" width="5" height="5" rx="1" stroke="#3a8fd8" stroke-width="1.5"/><rect x="18" y="19" width="5" height="5" rx="1" stroke-width="1.5"/><path d="M27 7.5 H43 M27 14.5 H43 M27 21.5 H43"/>
<path d="M58 7 V24" stroke="#888" stroke-width="1.2"/>
<rect x="75" y="4" width="23" height="23" stroke="#3a8fd8" stroke-width="1.5" stroke-dasharray="1.5 3"/><circle cx="87" cy="14" r="6.5"/><path d="M82 20 L76 27"/>
<circle cx="127" cy="13" r="6.5"/><path d="M122 19 L116 26"/><path d="M124 13 H130" stroke="#3a8fd8"/>
<path d="M149 10 V4 H155 M168 4 H174 V10 M174 21 V27 H168" stroke="#3a8fd8"/><circle cx="161" cy="14" r="7"/><path d="M156 20 L150 27"/>
<circle cx="198" cy="15" r="6.5"/><path d="M193 21 L188 27"/><path d="M201 10 L210 3 M204 3 H210 V9" stroke="#3a8fd8"/>
<path d="M227 12 A9 9 0 0 1 245 11 M245 18 A9 9 0 0 1 227 19"/><path d="M243 8 L246 11 L249 14 M229 16 L226 19 L223 22"/>
<path d="M266 12 A8 8 0 1 1 268 20"/><path d="M264 7 L265 13 L271 14"/>
<path d="M316 12 A8 8 0 1 0 314 20"/><path d="M318 7 L317 13 L311 14"/>
<path d="M338 7 V24" stroke="#888" stroke-width="1.2"/>
<rect x="359" y="5" width="14" height="6"/><rect x="354" y="10" width="24" height="12" rx="3"/><rect x="359" y="16" width="14" height="10"/><path d="M362 20 H371 M362 23 H371" stroke="#3a8fd8" stroke-width="1.5"/>
<path d="M394 7 V24" stroke="#888" stroke-width="1.2"/>
<path d="M419 10 L424 27 L427 21 L431 27 L434 24 L430 19 L435 16 Z"/><path d="M414 15 V27 M414 11 V12" stroke="#3a8fd8" stroke-width="2"/><path d="M415 4 L418 7 M412 8 L416 9" stroke="#777" stroke-width="1.2"/>
<path d="M451 7 V24" stroke="#888" stroke-width="1.2"/>
<path d="M469 9 V4 H476 L479 7 H488 V11 M469 27 V11 H492 L490 27 Z"/>
<path d="M504 4 V28" stroke="#999" stroke-width="1" stroke-dasharray="1.5 2.5"/>
</svg>
<div class="a" style="left:871px;top:1008px;font-size:12px">1:</div>
<div class="a" style="left:882px;top:1005px;width:69px;height:20px;border:1px solid #7a7a7a;background:#fff;font-size:12px;line-height:18px;padding-left:3px">2346</div>
<svg class="a" style="left:935px;top:1011px" width="12" height="8"><path d="M2 2 L6 6 L10 2" stroke="#333" stroke-width="1.3" fill="none"/></svg>
<svg class="a" style="left:958px;top:1000px" width="200" height="30" fill="none" stroke="#777" stroke-width="1.8">
<path d="M2 4 V28" stroke="#999" stroke-width="1" stroke-dasharray="1.5 2.5"/>
<rect x="14" y="4" width="25" height="22" stroke="#3a8fd8" stroke-width="1.6" stroke-dasharray="1.5 3"/><path d="M23 11 L27 27 L30 22 L35 28 L38 25 L33 20 L39 18 Z"/>
<circle cx="64" cy="16" r="12" stroke="#3a8fd8" stroke-width="1.6" stroke-dasharray="1.5 3"/><path d="M61 11 L65 27 L68 22 L73 28 L76 25 L71 20 L77 18 Z"/>
<rect x="89" y="4" width="24" height="24" stroke="#3a8fd8" stroke-width="2" stroke-dasharray="2 4"/><path d="M98 11 L102 27 L105 22 L110 28 L113 25 L108 20 L114 18 Z"/>
<rect x="126" y="4" width="24" height="24" stroke="#3a8fd8" stroke-width="2" stroke-dasharray="2 4"/><rect x="131" y="9" width="13" height="13" fill="#888" stroke="none"/><path d="M136 11 L140 27 L143 22 L148 28 L151 25 L146 20 L152 18 Z"/>
<path d="M170 11 L174 27 L177 22 L182 28 L185 25 L180 20 L186 18 Z"/><path d="M178 7 L181 10 L186 3" stroke="#3a8fd8" stroke-width="1.8"/>
</svg>
<div class="a" style="left:1152px;top:1002px;width:127px;height:26px;border:1px solid #adadad;background:#e5e5e5;font-size:12.5px;line-height:24px;padding-left:3px">alles</div>
<svg class="a" style="left:1261px;top:1011px" width="12" height="8"><path d="M2 2 L6 6 L10 2" stroke="#333" stroke-width="1.3" fill="none"/></svg>
<svg class="a" style="left:29px;top:776px" width="301" height="249" viewBox="0 0 301 249">
<rect width="301" height="249" fill="#f8f7f1"/>
<polygon points="171.0,-1.0 303.5,-1.0 303.5,69.0 266.0,56.5 233.5,24.0 186.0,21.5" fill="#e8f0dc"/>
<polygon points="1.0,64.0 41.0,69.0 71.0,84.0 61.0,114.0 26.0,129.0 1.0,134.0" fill="#e8f0dc"/>
<polygon points="1.0,-1.0 31.0,-1.0 41.0,31.5 11.0,39.0 1.0,31.5" fill="#e8f0dc"/>
<polygon points="221.0,134.0 303.5,119.0 303.5,169.0 246.0,184.0" fill="#e8f0dc"/>
<polygon points="1.0,201.5 56.0,206.5 71.0,249.0 1.0,249.0" fill="#e8f0dc"/>
<polygon points="82.2,54.0 91.0,53.0 94.0,61.0 101.0,67.8 113.5,69.5 126.0,61.5 132.2,55.2 139.8,51.5 146.0,47.8 156.0,50.2 162.2,54.0 176.0,52.8 196.0,46.5 199.0,38.5 213.5,26.5 231.0,34.0 238.5,41.5 258.5,31.5 276.0,40.2 293.5,39.0 294.8,61.5 299.0,64.0 261.0,68.5 260.5,89.0 248.5,99.0 206.0,102.0 194.0,130.2 186.0,141.5 182.2,161.5 171.0,159.0 158.5,154.5 156.0,160.2 153.5,169.0 149.0,184.0 136.0,201.5 132.2,209.0 131.0,221.5 121.0,219.0 113.5,214.0 92.2,211.5 84.8,204.0 83.5,199.0 71.0,201.5 57.2,202.8 56.0,191.5 51.0,191.5 26.0,194.0 14.8,194.0 11.0,179.5 7.2,169.0 11.0,154.0 16.0,139.0 23.5,134.0 28.5,130.2 36.0,130.2 43.5,124.0 53.5,116.5 66.0,109.0 71.0,101.5 79.8,89.0 80.5,76.5 83.5,69.0" fill="#f4f0e4"/>
<polygon points="196.0,46.5 213.5,26.5 231.0,34.0 238.5,41.5 258.5,31.5 276.0,40.2 293.5,39.0 294.8,61.5 299.0,64.0 261.0,68.5 260.5,89.0 248.5,99.0 206.0,102.0 211.0,79.0 203.5,74.0 211.0,66.5 206.0,47.8" fill="#d9e8c6"/>
<polygon points="36.0,130.2 46.0,114.0 71.0,106.5 91.0,104.0 103.5,109.0 113.5,139.0 101.0,149.0 78.5,154.0 61.0,144.0" fill="#d9e8c6"/>
<polygon points="53.5,156.5 68.5,159.0 66.0,194.0 56.0,192.8" fill="#d9e8c6"/>
<polygon points="78.5,186.5 101.0,189.0 91.0,201.5 78.5,199.0" fill="#d9e8c6"/>
<polygon points="146.0,99.0 166.0,111.5 156.0,134.0 141.0,124.0" fill="#d9e8c6"/>
<polygon points="216.0,39.0 236.0,44.0 246.0,54.0 221.0,54.0" fill="#f3efe2"/>
<polygon points="256.0,46.5 283.5,51.5 283.5,64.0 261.0,65.2" fill="#f3efe2"/>
<polyline points="1.0,111.5 71.0,104.0 101.0,99.0 146.0,89.0" fill="none" stroke="#d9d9d9" stroke-width="4.5"/>
<polyline points="46.0,154.0 101.0,146.5 136.0,139.0 221.0,111.5" fill="none" stroke="#d9d9d9" stroke-width="4.5"/>
<polyline points="16.0,-1.0 46.0,44.0 66.0,76.5 81.0,99.0" fill="none" stroke="#d9d9d9" stroke-width="4.5"/>
<polyline points="171.0,-1.0 166.0,24.0 161.0,44.0" fill="none" stroke="#d9d9d9" stroke-width="4.5"/>
<polyline points="1.0,149.0 66.0,151.5" fill="none" stroke="#d9d9d9" stroke-width="4.5"/>
<polyline points="171.0,4.0 186.0,29.0 221.0,51.5 303.5,44.0" fill="none" stroke="#d9d9d9" stroke-width="4.5"/>
<polyline points="116.0,69.0 131.0,54.0 151.0,64.0" fill="none" stroke="#d9d9d9" stroke-width="4.5"/>
<polyline points="151.0,124.0 176.0,134.0 186.0,149.0" fill="none" stroke="#d9d9d9" stroke-width="4.5"/>
<polyline points="211.0,24.0 241.0,19.0 266.0,4.0" fill="none" stroke="#d9d9d9" stroke-width="4.5"/>
<polyline points="1.0,169.0 26.0,159.0 53.5,154.0" fill="none" stroke="#d9d9d9" stroke-width="4.5"/>
<polyline points="236.0,154.0 271.0,169.0 303.5,164.0" fill="none" stroke="#d9d9d9" stroke-width="4.5"/>
<polyline points="121.0,214.0 136.0,249.0" fill="none" stroke="#d9d9d9" stroke-width="4.5"/>
<polyline points="246.0,184.0 261.0,219.0 303.5,234.0" fill="none" stroke="#d9d9d9" stroke-width="4.5"/>
<polyline points="1.0,111.5 71.0,104.0 101.0,99.0 146.0,89.0" fill="none" stroke="#ffffff" stroke-width="2.5"/>
<polyline points="46.0,154.0 101.0,146.5 136.0,139.0 221.0,111.5" fill="none" stroke="#ffffff" stroke-width="2.5"/>
<polyline points="16.0,-1.0 46.0,44.0 66.0,76.5 81.0,99.0" fill="none" stroke="#ffffff" stroke-width="2.5"/>
<polyline points="171.0,-1.0 166.0,24.0 161.0,44.0" fill="none" stroke="#ffffff" stroke-width="2.5"/>
<polyline points="1.0,149.0 66.0,151.5" fill="none" stroke="#ffffff" stroke-width="2.5"/>
<polyline points="171.0,4.0 186.0,29.0 221.0,51.5 303.5,44.0" fill="none" stroke="#ffffff" stroke-width="2.5"/>
<polyline points="116.0,69.0 131.0,54.0 151.0,64.0" fill="none" stroke="#ffffff" stroke-width="2.5"/>
<polyline points="151.0,124.0 176.0,134.0 186.0,149.0" fill="none" stroke="#ffffff" stroke-width="2.5"/>
<polyline points="211.0,24.0 241.0,19.0 266.0,4.0" fill="none" stroke="#ffffff" stroke-width="2.5"/>
<polyline points="1.0,169.0 26.0,159.0 53.5,154.0" fill="none" stroke="#ffffff" stroke-width="2.5"/>
<polyline points="236.0,154.0 271.0,169.0 303.5,164.0" fill="none" stroke="#ffffff" stroke-width="2.5"/>
<polyline points="121.0,214.0 136.0,249.0" fill="none" stroke="#ffffff" stroke-width="2.5"/>
<polyline points="246.0,184.0 261.0,219.0 303.5,234.0" fill="none" stroke="#ffffff" stroke-width="2.5"/>
<g fill="none" stroke="#e2e2e2" stroke-width="1">
<polyline points="21.0,-1.0 46.0,69.0 71.0,114.0"/>
<polyline points="221.0,-1.0 246.0,24.0 303.5,16.5"/>
<polyline points="171.0,219.0 196.0,249.0"/>
<polyline points="1.0,219.0 46.0,244.0"/>
<polyline points="221.0,144.0 303.5,154.0"/>
<polyline points="108.5,-1.0 136.0,51.5"/>
<polyline points="1.0,89.0 56.0,84.0"/>
<polyline points="36.0,9.0 91.0,19.0 136.0,4.0"/>
<polyline points="271.0,94.0 303.5,89.0"/>
<polyline points="216.0,199.0 303.5,199.0"/>
</g>
<polyline points="82.2,66.5 91.0,76.5 101.0,89.0 116.0,95.2 131.0,92.8 146.0,90.2 166.0,91.5 176.0,89.0 186.0,94.0 203.5,101.5" fill="none" stroke="#f2a93a" stroke-width="2.6"/>
<polyline points="146.0,50.2 147.2,64.0 161.0,66.5 171.0,76.5 173.5,89.0" fill="none" stroke="#f2a93a" stroke-width="2.6"/>
<polyline points="1.0,40.2 38.5,46.5 61.0,59.0 82.2,66.5" fill="none" stroke="#f5d29a" stroke-width="2"/>
<polyline points="113.5,1.5 126.0,24.0 146.0,47.8" fill="none" stroke="#f5d29a" stroke-width="2"/>
<polyline points="203.5,101.5 221.0,134.0 236.0,154.0" fill="none" stroke="#f5d29a" stroke-width="2"/>
<polyline points="303.5,156.5 261.0,169.0 251.0,199.0 196.0,244.0" fill="none" stroke="#f5d29a" stroke-width="2"/>
<g fill="none" stroke="#6a6a6a" stroke-width="3" stroke-linejoin="round" opacity="0.9">
<polygon points="82.2,54.0 91.0,53.0 94.0,61.0 101.0,67.8 113.5,69.5 126.0,61.5 132.2,55.2 139.8,51.5 146.0,47.8 156.0,50.2 162.2,54.0 176.0,52.8 196.0,46.5 199.0,38.5 213.5,26.5 231.0,34.0 238.5,41.5 258.5,31.5 276.0,40.2 293.5,39.0 294.8,61.5 299.0,64.0 261.0,68.5 260.5,89.0 248.5,99.0 206.0,102.0 194.0,130.2 186.0,141.5 182.2,161.5 171.0,159.0 158.5,154.5 156.0,160.2 153.5,169.0 149.0,184.0 136.0,201.5 132.2,209.0 131.0,221.5 121.0,219.0 113.5,214.0 92.2,211.5 84.8,204.0 83.5,199.0 71.0,201.5 57.2,202.8 56.0,191.5 51.0,191.5 26.0,194.0 14.8,194.0 11.0,179.5 7.2,169.0 11.0,154.0 16.0,139.0 23.5,134.0 28.5,130.2 36.0,130.2 43.5,124.0 53.5,116.5 66.0,109.0 71.0,101.5 79.8,89.0 80.5,76.5 83.5,69.0"/>
<polyline points="73.5,104.0 101.0,101.5 121.0,99.0 131.0,101.5"/>
<polyline points="103.5,109.0 113.5,139.0 103.5,159.0 66.0,157.8"/>
<polyline points="36.0,130.2 56.0,141.5 66.0,157.8 61.0,174.0 56.0,191.5"/>
<polyline points="66.0,157.8 103.5,159.0 113.5,174.0 86.0,202.8"/>
<polyline points="113.5,174.0 131.0,166.5 146.0,144.0 156.0,141.5"/>
<polyline points="131.0,166.5 136.0,189.0"/>
<polyline points="103.5,109.0 126.0,111.5 136.0,121.5 156.0,119.0 158.5,109.0 171.0,101.5 186.0,109.0 194.0,130.2"/>
<polyline points="146.0,69.0 136.0,76.5 126.0,99.0 136.0,121.5"/>
<polyline points="176.0,52.8 178.5,74.0 196.0,74.0 211.0,66.5 206.0,47.8 196.0,46.5"/>
<polyline points="203.5,74.0 213.5,80.2 260.5,69.0"/>
<polyline points="146.0,144.0 158.5,154.5"/>
<polyline points="116.0,69.0 121.0,79.0 136.0,76.5"/>
<polyline points="158.5,109.0 156.0,89.0 171.0,76.5"/>
</g>
<rect x="0.5" y="0.5" width="300" height="248" fill="none" stroke="#cfe3f5" stroke-width="1"/>
<path d="M138 0 V249 M0 84 H301" stroke="#36a9e1" stroke-width="2"/>
<rect x="134" y="81" width="8" height="8.5" fill="#f5a040" stroke="#1a2a60" stroke-width="1"/>
<g font-family="Liberation Sans" font-size="9.5" fill="#111">
<text x="220" y="59" letter-spacing="0.6">Theisa</text>
<text x="190" y="95" letter-spacing="0.6">Dobra</text>
<text x="133" y="80" letter-spacing="0.6">Bad</text>
<text x="124" y="93" letter-spacing="0.6">Lieben-</text>
<text x="127" y="102" letter-spacing="0.6">werda</text>
<text x="69" y="134" letter-spacing="0.6">Möglenz</text>
<text x="15" y="172" letter-spacing="0.6">Burxdorf</text>
<text x="96" y="200" letter-spacing="0.6">Kröbeln</text>
</g>
<g transform="translate(200,126)">
<path d="M0.5 0.5 H59 V38 Q59 62 29.75 67 Q0.5 62 0.5 38 Z" fill="#fff" stroke="#222" stroke-width="1"/>
<circle cx="29.5" cy="6" r="2.6" fill="#111"/>
<path d="M23 10 H36 L44 22 H15 Z" fill="#1f63b4" stroke="#0b2f66" stroke-width="0.8"/>
<rect x="14" y="20" width="31" height="5" fill="#1f63b4" stroke="#0b2f66" stroke-width="0.8"/>
<rect x="17" y="25" width="25" height="29" fill="#1f63b4" stroke="#0b2f66" stroke-width="0.8"/>
<path d="M11 54 H48 Q50 60 44 61 H15 Q9 60 11 54 Z" fill="#1f63b4" stroke="#0b2f66" stroke-width="0.8"/>
<path d="M22 30 H37 V42 Q37 48 29.5 51 Q22 48 22 42 Z" fill="#fff" stroke="#0b2f66" stroke-width="0.6"/>
<g fill="#e0202a"><circle cx="26" cy="36" r="2.4"/><circle cx="33" cy="36" r="2.4"/><circle cx="29.5" cy="43" r="2.4"/></g>
</g>
<text x="232" y="213" font-family="Liberation Sans" font-size="19.5" text-anchor="middle" fill="#111">Bad</text>
<text x="232" y="234" font-family="Liberation Sans" font-size="19.5" text-anchor="middle" fill="#111">Liebenwerda</text>
</svg>
<div id="dlg" class="a"></div>
<svg class="a" style="left:1430px;top:18px" width="14" height="10" viewBox="0 0 14 10"><path d="M1 3 Q7 -1 13 3 L8 5 L7 9 L6 5 Z" fill="#2e8a7a"/></svg>
<div class="a" style="left:1450px;top:16px;font-size:11.8px;white-space:nowrap">eingeschränkter Kartenmanager</div>
<svg class="a" style="left:1780px;top:12px" width="115" height="24" fill="none" stroke="#111" stroke-width="1"><path d="M6 11.5 H16"/><rect x="51.5" y="6.5" width="10" height="10"/><path d="M97 6 L107 16 M107 6 L97 16"/></svg>
<div class="a" style="left:1421px;top:39px;width:483px;height:300px;border-top:2px solid #6b6b6b;border-left:2px solid #6b6b6b;border-bottom:1px solid #a0a0a0;background:#fff;overflow:hidden">
<svg class="a" style="left:0;top:0" width="480" height="300">
<rect x="5.5" y="-2.5" width="8" height="8" rx="1" fill="#f4f4f4" stroke="#8a8a8a" stroke-width="1"/>
<path d="M7.5 1.5 H11.5" stroke="#2a3a8a" stroke-width="1.3"/>
<path d="M9.5 -0.5 V3.5" stroke="#2a3a8a" stroke-width="1.3"/>
<path d="M15 1.5 H20" stroke="#999" stroke-dasharray="1 1.5"/>
<path d="M21.5 -6.0 H33 Q34 -6.0 34 -4.0 V9.0 H21.5 Z" fill="#fbe39a" stroke="#e8c25a" stroke-width="1"/>
<path d="M9.5 6.0 V14.0" stroke="#999" stroke-dasharray="1 1.5"/>
<rect x="5.5" y="13.5" width="8" height="8" rx="1" fill="#f4f4f4" stroke="#8a8a8a" stroke-width="1"/>
<path d="M7.5 17.5 H11.5" stroke="#2a3a8a" stroke-width="1.3"/>
<path d="M9.5 15.5 V19.5" stroke="#2a3a8a" stroke-width="1.3"/>
<path d="M15 17.5 H20" stroke="#999" stroke-dasharray="1 1.5"/>
<path d="M21.5 10.0 H33 Q34 10.0 34 12.0 V25.0 H21.5 Z" fill="#fbe39a" stroke="#e8c25a" stroke-width="1"/>
<path d="M9.5 22.0 V30.0" stroke="#999" stroke-dasharray="1 1.5"/>
<rect x="5.5" y="29.5" width="8" height="8" rx="1" fill="#f4f4f4" stroke="#8a8a8a" stroke-width="1"/>
<path d="M7.5 33.5 H11.5" stroke="#2a3a8a" stroke-width="1.3"/>
<path d="M9.5 31.5 V35.5" stroke="#2a3a8a" stroke-width="1.3"/>
<path d="M15 33.5 H20" stroke="#999" stroke-dasharray="1 1.5"/>
<path d="M21.5 26.0 H33 Q34 26.0 34 28.0 V41.0 H21.5 Z" fill="#fbe39a" stroke="#e8c25a" stroke-width="1"/>
<path d="M9.5 38.0 V46.0" stroke="#999" stroke-dasharray="1 1.5"/>
<rect x="5.5" y="45.5" width="8" height="8" rx="1" fill="#f4f4f4" stroke="#8a8a8a" stroke-width="1"/>
<path d="M7.5 49.5 H11.5" stroke="#2a3a8a" stroke-width="1.3"/>
<path d="M9.5 47.5 V51.5" stroke="#2a3a8a" stroke-width="1.3"/>
<path d="M15 49.5 H20" stroke="#999" stroke-dasharray="1 1.5"/>
<path d="M21.5 42.0 H33 Q34 42.0 34 44.0 V57.0 H21.5 Z" fill="#fbe39a" stroke="#e8c25a" stroke-width="1"/>
<path d="M9.5 54.0 V62.0" stroke="#999" stroke-dasharray="1 1.5"/>
<rect x="5.5" y="61.5" width="8" height="8" rx="1" fill="#f4f4f4" stroke="#8a8a8a" stroke-width="1"/>
<path d="M7.5 65.5 H11.5" stroke="#2a3a8a" stroke-width="1.3"/>
<path d="M9.5 63.5 V67.5" stroke="#2a3a8a" stroke-width="1.3"/>
<path d="M15 65.5 H20" stroke="#999" stroke-dasharray="1 1.5"/>
<path d="M21.5 58.0 H33 Q34 58.0 34 60.0 V73.0 H21.5 Z" fill="#fbe39a" stroke="#e8c25a" stroke-width="1"/>
<path d="M9.5 70.0 V78.0" stroke="#999" stroke-dasharray="1 1.5"/>
<rect x="5.5" y="77.5" width="8" height="8" rx="1" fill="#f4f4f4" stroke="#8a8a8a" stroke-width="1"/>
<path d="M7.5 81.5 H11.5" stroke="#2a3a8a" stroke-width="1.3"/>
<path d="M9.5 79.5 V83.5" stroke="#2a3a8a" stroke-width="1.3"/>
<path d="M15 81.5 H20" stroke="#999" stroke-dasharray="1 1.5"/>
<path d="M21.5 74.0 H33 Q34 74.0 34 76.0 V89.0 H21.5 Z" fill="#fbe39a" stroke="#e8c25a" stroke-width="1"/>
<path d="M9.5 86.0 V94.0" stroke="#999" stroke-dasharray="1 1.5"/>
<path d="M9.5 90.0 V97.5 H20" stroke="#999" stroke-dasharray="1 1.5" fill="none"/>
<path d="M21 96.5 H33 M21 98.5 H33" stroke="#666" stroke-width="1"/>
<path d="M9.5 102.0 V110.0" stroke="#999" stroke-dasharray="1 1.5"/>
<rect x="5.5" y="109.5" width="8" height="8" rx="1" fill="#f4f4f4" stroke="#8a8a8a" stroke-width="1"/>
<path d="M7.5 113.5 H11.5" stroke="#2a3a8a" stroke-width="1.3"/>
<path d="M9.5 111.5 V115.5" stroke="#2a3a8a" stroke-width="1.3"/>
<path d="M15 113.5 H20" stroke="#999" stroke-dasharray="1 1.5"/>
<path d="M21.5 106.0 H33 Q34 106.0 34 108.0 V121.0 H21.5 Z" fill="#fbe39a" stroke="#e8c25a" stroke-width="1"/>
<path d="M9.5 118.0 V126.0" stroke="#999" stroke-dasharray="1 1.5"/>
<rect x="5.5" y="125.5" width="8" height="8" rx="1" fill="#f4f4f4" stroke="#8a8a8a" stroke-width="1"/>
<path d="M7.5 129.5 H11.5" stroke="#2a3a8a" stroke-width="1.3"/>
<path d="M9.5 127.5 V131.5" stroke="#2a3a8a" stroke-width="1.3"/>
<path d="M15 129.5 H20" stroke="#999" stroke-dasharray="1 1.5"/>
<path d="M21.5 122.0 H33 Q34 122.0 34 124.0 V137.0 H21.5 Z" fill="#fbe39a" stroke="#e8c25a" stroke-width="1"/>
<path d="M9.5 134.0 V142.0" stroke="#999" stroke-dasharray="1 1.5"/>
<rect x="5.5" y="141.5" width="8" height="8" rx="1" fill="#f4f4f4" stroke="#8a8a8a" stroke-width="1"/>
<path d="M7.5 145.5 H11.5" stroke="#2a3a8a" stroke-width="1.3"/>
<path d="M9.5 143.5 V147.5" stroke="#2a3a8a" stroke-width="1.3"/>
<path d="M15 145.5 H20" stroke="#999" stroke-dasharray="1 1.5"/>
<path d="M21.5 138.0 H33 Q34 138.0 34 140.0 V153.0 H21.5 Z" fill="#fbe39a" stroke="#e8c25a" stroke-width="1"/>
<path d="M9.5 150.0 V158.0" stroke="#999" stroke-dasharray="1 1.5"/>
<rect x="5.5" y="157.5" width="8" height="8" rx="1" fill="#f4f4f4" stroke="#8a8a8a" stroke-width="1"/>
<path d="M7.5 161.5 H11.5" stroke="#2a3a8a" stroke-width="1.3"/>
<path d="M9.5 159.5 V163.5" stroke="#2a3a8a" stroke-width="1.3"/>
<path d="M15 161.5 H20" stroke="#999" stroke-dasharray="1 1.5"/>
<path d="M21.5 154.0 H33 Q34 154.0 34 156.0 V169.0 H21.5 Z" fill="#fbe39a" stroke="#e8c25a" stroke-width="1"/>
<path d="M9.5 166.0 V174.0" stroke="#999" stroke-dasharray="1 1.5"/>
<rect x="5.5" y="173.5" width="8" height="8" rx="1" fill="#f4f4f4" stroke="#8a8a8a" stroke-width="1"/>
<path d="M7.5 177.5 H11.5" stroke="#2a3a8a" stroke-width="1.3"/>
<path d="M9.5 175.5 V179.5" stroke="#2a3a8a" stroke-width="1.3"/>
<path d="M15 177.5 H20" stroke="#999" stroke-dasharray="1 1.5"/>
<path d="M21.5 170.0 H33 Q34 170.0 34 172.0 V185.0 H21.5 Z" fill="#fbe39a" stroke="#e8c25a" stroke-width="1"/>
<path d="M9.5 182.0 V190.0" stroke="#999" stroke-dasharray="1 1.5"/>
<rect x="5.5" y="189.5" width="8" height="8" rx="1" fill="#f4f4f4" stroke="#8a8a8a" stroke-width="1"/>
<path d="M7.5 193.5 H11.5" stroke="#2a3a8a" stroke-width="1.3"/>
<path d="M9.5 191.5 V195.5" stroke="#2a3a8a" stroke-width="1.3"/>
<path d="M15 193.5 H20" stroke="#999" stroke-dasharray="1 1.5"/>
<path d="M21.5 186.0 H33 Q34 186.0 34 188.0 V201.0 H21.5 Z" fill="#fbe39a" stroke="#e8c25a" stroke-width="1"/>
<path d="M9.5 198.0 V206.0" stroke="#999" stroke-dasharray="1 1.5"/>
<rect x="5.5" y="205.5" width="8" height="8" rx="1" fill="#f4f4f4" stroke="#8a8a8a" stroke-width="1"/>
<path d="M7.5 209.5 H11.5" stroke="#2a3a8a" stroke-width="1.3"/>
<path d="M9.5 207.5 V211.5" stroke="#2a3a8a" stroke-width="1.3"/>
<path d="M15 209.5 H20" stroke="#999" stroke-dasharray="1 1.5"/>
<path d="M21.5 202.0 H33 Q34 202.0 34 204.0 V217.0 H21.5 Z" fill="#fbe39a" stroke="#e8c25a" stroke-width="1"/>
<path d="M9.5 214.0 V222.0" stroke="#999" stroke-dasharray="1 1.5"/>
<rect x="5.5" y="221.5" width="8" height="8" rx="1" fill="#f4f4f4" stroke="#8a8a8a" stroke-width="1"/>
<path d="M7.5 225.5 H11.5" stroke="#2a3a8a" stroke-width="1.3"/>
<path d="M9.5 223.5 V227.5" stroke="#2a3a8a" stroke-width="1.3"/>
<path d="M15 225.5 H20" stroke="#999" stroke-dasharray="1 1.5"/>
<path d="M21.5 218.0 H33 Q34 218.0 34 220.0 V233.0 H21.5 Z" fill="#fbe39a" stroke="#e8c25a" stroke-width="1"/>
<path d="M9.5 230.0 V238.0" stroke="#999" stroke-dasharray="1 1.5"/>
<rect x="5.5" y="237.5" width="8" height="8" rx="1" fill="#f4f4f4" stroke="#8a8a8a" stroke-width="1"/>
<path d="M7.5 241.5 H11.5" stroke="#2a3a8a" stroke-width="1.3"/>
<path d="M9.5 239.5 V243.5" stroke="#2a3a8a" stroke-width="1.3"/>
<path d="M15 241.5 H20" stroke="#999" stroke-dasharray="1 1.5"/>
<path d="M21.5 234.0 H33 Q34 234.0 34 236.0 V249.0 H21.5 Z" fill="#fbe39a" stroke="#e8c25a" stroke-width="1"/>
<path d="M9.5 246.0 V254.0" stroke="#999" stroke-dasharray="1 1.5"/>
<rect x="5.5" y="253.5" width="8" height="8" rx="1" fill="#f4f4f4" stroke="#8a8a8a" stroke-width="1"/>
<path d="M7.5 257.5 H11.5" stroke="#2a3a8a" stroke-width="1.3"/>
<path d="M15 257.5 H20" stroke="#999" stroke-dasharray="1 1.5"/>
<path d="M21.5 250.0 H33 Q34 250.0 34 252.0 V265.0 H21.5 Z" fill="#fbe39a" stroke="#e8c25a" stroke-width="1"/>
<path d="M9.5 262.0 V270.0" stroke="#999" stroke-dasharray="1 1.5"/>
<path d="M27.5 266.0 V273.5 H38" stroke="#999" stroke-dasharray="1 1.5" fill="none"/>
<path d="M38 272.5 H52 M38 274.5 H52" stroke="#666" stroke-width="1"/>
<path d="M9.5 278.0 V286.0" stroke="#999" stroke-dasharray="1 1.5"/>
<rect x="5.5" y="285.5" width="8" height="8" rx="1" fill="#f4f4f4" stroke="#8a8a8a" stroke-width="1"/>
<path d="M7.5 289.5 H11.5" stroke="#2a3a8a" stroke-width="1.3"/>
<path d="M9.5 287.5 V291.5" stroke="#2a3a8a" stroke-width="1.3"/>
<path d="M15 289.5 H20" stroke="#999" stroke-dasharray="1 1.5"/>
<path d="M21.5 282.0 H33 Q34 282.0 34 284.0 V297.0 H21.5 Z" fill="#fbe39a" stroke="#e8c25a" stroke-width="1"/>
</svg>
<div class="tr" style="left:39px;top:-6px;font-size:12.7px">Bad Liebenwerda:</div>
<div class="tr" style="left:39px;top:10px;font-size:12.7px">Baum- und Grünflächenkataster</div>
<div class="tr" style="left:39px;top:26px;font-size:12.7px">Bebauungspläne</div>
<div class="tr" style="left:39px;top:42px;font-size:12.7px">Flächennutzungsplan</div>
<div class="tr" style="left:39px;top:58px;font-size:12.7px">Friedhofskataster</div>
<div class="tr" style="left:39px;top:74px;font-size:12.7px">Gebäudekataster</div>
<div class="tr" style="left:38px;top:90px;font-size:12.7px">Gemearkungsübersicht (Stand 03/2018</div>
<div class="tr" style="left:39px;top:106px;font-size:12.7px">Gewässerkarte</div>
<div class="tr" style="left:39px;top:122px;font-size:12.7px">Infra Planungen</div>
<div class="tr" style="left:39px;top:138px;font-size:12.7px">Jagd</div>
<div class="tr" style="left:39px;top:154px;font-size:12.7px">Kabel und Leitungen (keine Straßenbeleuchtung)</div>
<div class="tr" style="left:39px;top:170px;font-size:12.7px">Kleinräumige Gliederung</div>
<div class="tr" style="left:39px;top:186px;font-size:12.7px">Kurstadtregion</div>
<div class="tr" style="left:39px;top:202px;font-size:12.7px">Landschaftsplan</div>
<div class="tr" style="left:39px;top:218px;font-size:12.7px">Liegenschaften</div>
<div class="tr" style="left:39px;top:234px;font-size:12.7px">Luftbilder</div>
<div class="tr" style="left:39px;top:250px;font-size:12.7px">Löschwasser</div>
<div class="tr" style="left:56px;top:266px;background:#2aa8df;color:#fff;padding:0 2px;font-size:12.7px">Löschwasserentnahmestellen</div>
<div class="tr" style="left:39px;top:282px;font-size:12.7px">Sanierungsgebiet</div>
<div class="a" style="left:465px;top:0;width:17px;height:298px;background:#f0f0f0"></div>
<div class="a" style="left:467px;top:159px;width:13px;height:76px;background:#cdcdcd"></div>
<svg class="a" style="left:465px;top:0" width="17" height="298"><path d="M5 13 L8.5 9.5 L12 13" stroke="#606060" stroke-width="2" fill="none"/><path d="M5 286 L8.5 289.5 L12 286" stroke="#606060" stroke-width="1.5" fill="none"/></svg>
</div>
<svg class="a" style="left:1427px;top:338px" width="20" height="7"><path d="M1 6 L4.5 2 L8 6 Z M11 1 H18 L14.5 5 Z" fill="#111"/></svg>
<div class="a" style="left:1421px;top:344px;width:483px;height:2px;background:#6b6b6b"></div>
<div class="a" style="left:1421px;top:344px;width:2px;height:171px;background:#6b6b6b"></div>
<div class="a" style="left:1625px;top:344px;width:2px;height:171px;background:#6b6b6b"></div>
<svg class="a" style="left:1621px;top:349px" width="6" height="30"><path d="M5 1 L1 4.5 L5 8 Z M1 20 L5 23.5 L1 27 Z" fill="#111"/></svg>
<div class="a" style="left:1425px;top:351px;width:195px;height:161px;border:1px solid #dcdcdc"></div>
<div class="a" style="left:1430px;top:345px;background:#fff;padding:0 2px;font-size:11.8px;white-space:nowrap">Selektierte Karten</div>
<div class="a" style="left:1429px;top:361px;width:187px;height:18px;background:#2aa8df"></div>
<svg class="a" style="left:1431px;top:365px" width="16" height="30"><path d="M1 5 H14 M1 7 H14" stroke="#555" stroke-width="1"/><path d="M2 23 L8 20 L14 23 L8 26 Z" fill="none" stroke="#888" stroke-width="1"/><path d="M2 26 L8 29 L14 26" fill="none" stroke="#3a8fd8" stroke-width="1"/></svg>
<div class="a" style="left:1449px;top:362px;font-size:12.8px;color:#fff;white-space:nowrap;width:167px;overflow:hidden">Löschwasserentnahmestellen</div>
<div class="a" style="left:1449px;top:381px;font-size:12.8px;white-space:nowrap">ALKIS</div>
<div class="a" style="left:1429px;top:492px;width:187px;height:15px;background:#f0f0f0"></div>
<div class="a" style="left:1446px;top:492px;width:152px;height:15px;background:#cdcdcd"></div>
<svg class="a" style="left:1429px;top:492px" width="187" height="15"><path d="M10 4 L6.5 7.5 L10 11 M177 4 L180.5 7.5 L177 11" stroke="#606060" stroke-width="1.5" fill="none"/></svg>
<div class="a" style="left:1630px;top:351px;width:242px;height:161px;border:1px solid #dcdcdc"></div>
<div class="a" style="left:1634px;top:345px;background:#fff;padding:0 2px;font-size:11.8px;white-space:nowrap">Styles</div>
<div class="cb" style="left:1637px;top:362px"></div>
<div class="a" style="left:1654px;top:361px;font-size:12.8px;white-space:nowrap;line-height:15px">Status LWES</div>
<div class="cb" style="left:1637px;top:377px"></div>
<div class="a" style="left:1654px;top:376px;font-size:12.8px;white-space:nowrap;line-height:15px">Ergiebigkeit LWES</div>
<div class="cb" style="left:1637px;top:392px"></div>
<svg class="a" style="left:1637px;top:392px" width="13" height="13"><path d="M2.5 6.5 L5 9 L10.5 3.5" stroke="#333" stroke-width="1.3" fill="none"/></svg>
<div class="a" style="left:1654px;top:391px;font-size:12.8px;white-space:nowrap;line-height:15px">Feuerwehrsymbole (DIN 14034-6)</div>
<div class="cb" style="left:1637px;top:407px"></div>
<svg class="a" style="left:1637px;top:407px" width="13" height="13"><path d="M2.5 6.5 L5 9 L10.5 3.5" stroke="#333" stroke-width="1.3" fill="none"/></svg>
<div class="a" style="left:1654px;top:406px;font-size:12.8px;white-space:nowrap;line-height:15px">+ Ergiebigkeit / Nennweite</div>
<div class="cb" style="left:1637px;top:422px"></div>
<svg class="a" style="left:1637px;top:422px" width="13" height="13"><path d="M2.5 6.5 L5 9 L10.5 3.5" stroke="#333" stroke-width="1.3" fill="none"/></svg>
<div class="a" style="left:1654px;top:421px;font-size:12.8px;white-space:nowrap;line-height:15px">+ Max. Versorgungsbereich 200m</div>
<div class="cb" style="left:1637px;top:437px"></div>
<div class="a" style="left:1654px;top:436px;font-size:12.8px;white-space:nowrap;line-height:15px">+ Max. Versorgungsbereich 300m</div>
<svg class="a" style="left:1875px;top:349px" width="30" height="150" fill="none" stroke-width="1.8">
<path d="M2 16 L14 10 L26 16 L14 22 Z" stroke="#3a8fd8"/><path d="M2 21 L14 27 L26 21" stroke="#888"/><path d="M14 17 V3 M10 7 L14 3 L18 7" stroke="#3a8fd8"/>
<path d="M2 45 L14 39 L26 45 L14 51 Z" stroke="#888"/><path d="M2 50 L14 56 L26 50" stroke="#3a8fd8"/><path d="M14 50 V63 M10 59 L14 63 L18 59" stroke="#3a8fd8"/>
<path d="M2 82 L14 76 L26 82 L14 88 Z" stroke="#888"/><path d="M2 87 L14 93 L26 87" stroke="#888"/><path d="M10 95 L18 102 M18 95 L10 102" stroke="#3a8fd8" stroke-width="2"/>
<path d="M3 109.5 H26" stroke="#999" stroke-width="1"/>
</svg>
<div class="a" style="left:1876px;top:462px;width:26px;height:35px;background:#d2e6f7;border:1px solid #a8d0f0"></div>
<svg class="a" style="left:1876px;top:462px" width="26" height="35" fill="none"><rect x="7.5" y="11.5" width="11" height="11" stroke="#3a8fd8" stroke-width="2"/><rect x="10.5" y="14.5" width="5" height="5" stroke="#666" stroke-width="1.3"/><path d="M13 3 V8 M13 26 V32 M2 17 H6 M20 17 H25" stroke="#777" stroke-width="1"/></svg>
<div class="btn" style="left:1546px;top:523px;width:45px">OK</div>
<div class="btn" style="left:1598px;top:523px;width:83px">Abbrechen</div>
<div class="btn" style="left:1688px;top:523px;width:91px;border-color:#0078d7;background:#e5f1fb"><div style="position:absolute;left:1px;top:1px;right:1px;bottom:1px;border:1px dotted #111"></div>Übernehmen</div>
<div id="taskbar" class="a"></div>
<div class="a" style="left:735px;top:1040px;width:48px;height:1px;background:#b06a28"></div>
</body></html>
